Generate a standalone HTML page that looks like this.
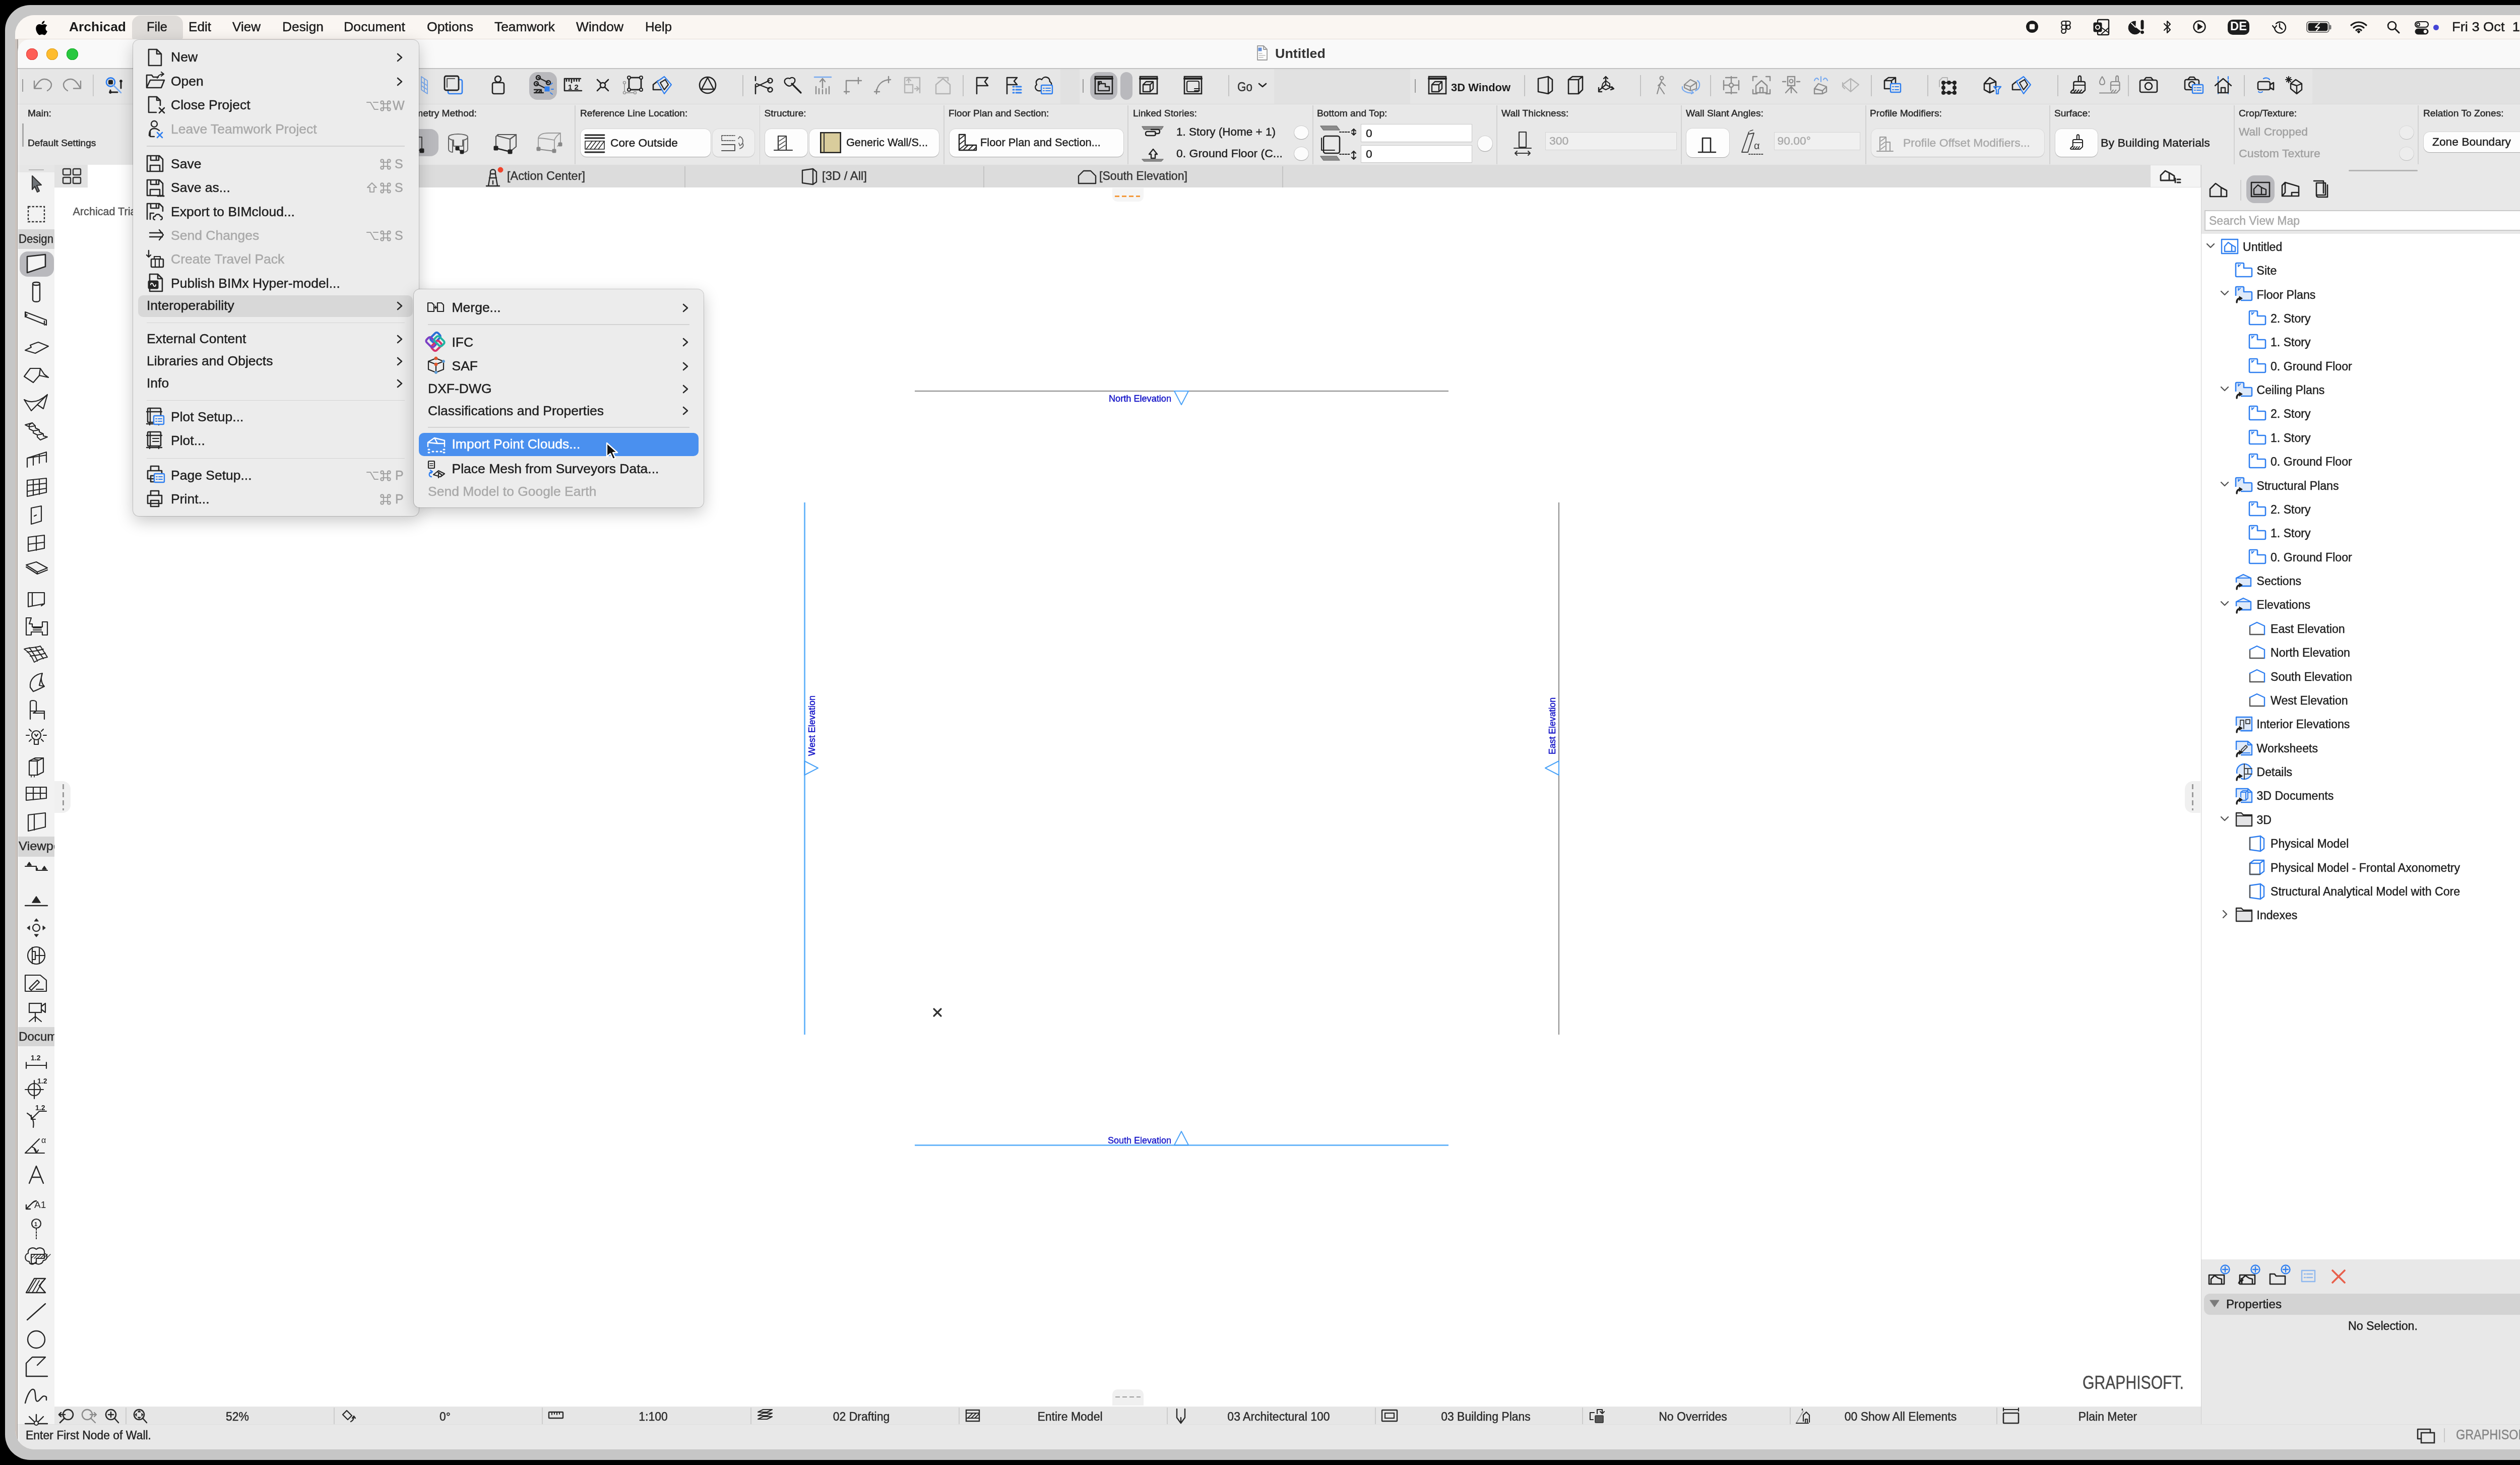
<!DOCTYPE html>
<html><head><meta charset="utf-8">
<style>
html,body{margin:0;padding:0;width:5120px;height:2907px;overflow:hidden;background:#000;}
#root{position:absolute;left:0;top:0;width:2560px;height:1453.5px;zoom:2;will-change:transform;font-family:"Liberation Sans",sans-serif;color:#222;}
.a{position:absolute;}
.t{position:absolute;white-space:nowrap;line-height:1;}
svg{position:absolute;overflow:visible;}
#frame{position:absolute;left:5px;top:5px;width:2550px;height:1443.5px;background:#c6c6c6;border-radius:25px;}
#screen{position:absolute;left:15px;top:15px;width:2530px;height:1423px;background:#f3efeb;border-radius:19px;overflow:hidden;}
#S{position:absolute;left:-15px;top:-15px;width:2560px;height:1453.5px;}
</style></head><body>
<div id="root">
<div id="frame"></div>
<div id="screen"><div id="S">
<div class="a" style="left:15.0px;top:15.0px;width:2530.0px;height:23.75px;background:#faf6f2;"></div>
<div class="a" style="left:15.0px;top:38.5px;width:2530.0px;height:0.5px;background:#e6dcd6;"></div>
<div class="a" style="left:15.0px;top:39.0px;width:2.5px;height:1399.0px;background:#cbc2bd;"></div>
<div class="a" style="left:17.0px;top:39.0px;width:0.75px;height:1399.0px;background:#a39e9a;"></div>
<div class="a" style="left:17.5px;top:39.0px;width:2527.5px;height:28.5px;background:#f9f9f9;border-top-left-radius:12px;border-top-right-radius:12px;"></div>
<div class="a" style="left:17.5px;top:67.5px;width:2527.5px;height:1.0px;background:#c2c2c2;"></div>
<div class="a" style="left:26.0px;top:47.75px;width:11.5px;height:11.5px;background:#fe5f57;border-radius:50%;box-shadow:inset 0 0 0 0.5px #e0443e;"></div>
<div class="a" style="left:46.0px;top:47.75px;width:11.5px;height:11.5px;background:#febc2e;border-radius:50%;box-shadow:inset 0 0 0 0.5px #dea123;"></div>
<div class="a" style="left:66.0px;top:47.75px;width:11.5px;height:11.5px;background:#28c840;border-radius:50%;box-shadow:inset 0 0 0 0.5px #1aab29;"></div>
<div class="a" style="left:17.5px;top:68.5px;width:2527.5px;height:34.5px;background:#e6e6e6;"></div>
<div class="a" style="left:17.5px;top:103.0px;width:2527.5px;height:0.5px;background:#d9d9d9;"></div>
<div class="a" style="left:17.5px;top:103.5px;width:2527.5px;height:60.0px;background:#e8e8e8;"></div>
<div class="a" style="left:17.5px;top:163.5px;width:2527.5px;height:22.5px;background:#dcdcdc;"></div>
<div class="a" style="left:54.0px;top:186.0px;width:2129.5px;height:1209.5px;background:#fff;"></div>
<div class="a" style="left:87.0px;top:163.5px;width:295.5px;height:22.5px;background:#fff;"></div>
<div class="a" style="left:17.5px;top:163.5px;width:36.5px;height:1250.0px;background:#f2f2f2;"></div>
<div class="a" style="left:17.5px;top:163.5px;width:36.5px;height:7.5px;background:#e6e6e6;"></div>
<div class="a" style="left:54.0px;top:163.5px;width:33.0px;height:22.0px;background:#e2e2e2;"></div>
<div class="a" style="left:2183.5px;top:163.5px;width:361.5px;height:1250.0px;background:#e8e8e8;"></div>
<div class="a" style="left:2183.25px;top:163.5px;width:0.75px;height:1250.0px;background:#cfcfcf;"></div>
<div class="a" style="left:2184.0px;top:232.0px;width:361.0px;height:1017.5px;background:#fff;"></div>
<div class="a" style="left:2133.5px;top:164.0px;width:49.5px;height:21.5px;background:#f4f4f4;"></div>
<div class="a" style="left:54.0px;top:1395.5px;width:2129.5px;height:18.0px;background:#e6e6e6;"></div>
<div class="a" style="left:17.5px;top:1413.5px;width:2527.5px;height:24.5px;background:#e8e8e8;"></div>
<div class="a" style="left:17.5px;top:1413.0px;width:2527.5px;height:0.5px;background:#dedede;"></div>
<div class="a" style="left:18.25px;top:68.5px;width:0.75px;height:1361.5px;background:rgba(255,255,255,0.7);"></div>
<div class="t" style="left:68.500px;top:19.992px;font-size:13.3px;color:#1a1a1a;font-weight:bold;transform:scaleX(0.9927);transform-origin:0 0;">Archicad</div>
<div class="a" style="left:131.0px;top:15.5px;width:50.5px;height:23.25px;background:#dfdcd9;border-radius:8px 8px 2px 2px;"></div>
<div class="t" style="left:145.500px;top:19.992px;font-size:13.3px;color:#1a1a1a;font-weight:normal;transform:scaleX(0.9566);transform-origin:0 0;-webkit-text-stroke:0.22px #1a1a1a;">File</div>
<div class="t" style="left:187.000px;top:19.992px;font-size:13.3px;color:#1a1a1a;font-weight:normal;transform:scaleX(0.9818);transform-origin:0 0;-webkit-text-stroke:0.22px #1a1a1a;">Edit</div>
<div class="t" style="left:230.500px;top:19.992px;font-size:13.3px;color:#1a1a1a;font-weight:normal;transform:scaleX(0.9794);transform-origin:0 0;-webkit-text-stroke:0.22px #1a1a1a;">View</div>
<div class="t" style="left:280.000px;top:19.992px;font-size:13.3px;color:#1a1a1a;font-weight:normal;transform:scaleX(0.9903);transform-origin:0 0;-webkit-text-stroke:0.22px #1a1a1a;">Design</div>
<div class="t" style="left:341.000px;top:19.992px;font-size:13.3px;color:#1a1a1a;font-weight:normal;transform:scaleX(1.0063);transform-origin:0 0;-webkit-text-stroke:0.22px #1a1a1a;">Document</div>
<div class="t" style="left:423.500px;top:19.992px;font-size:13.3px;color:#1a1a1a;font-weight:normal;transform:scaleX(1.0036);transform-origin:0 0;-webkit-text-stroke:0.22px #1a1a1a;">Options</div>
<div class="t" style="left:490.500px;top:19.992px;font-size:13.3px;color:#1a1a1a;font-weight:normal;transform:scaleX(0.9900);transform-origin:0 0;-webkit-text-stroke:0.22px #1a1a1a;">Teamwork</div>
<div class="t" style="left:571.500px;top:19.992px;font-size:13.3px;color:#1a1a1a;font-weight:normal;transform:scaleX(0.9936);transform-origin:0 0;-webkit-text-stroke:0.22px #1a1a1a;">Window</div>
<div class="t" style="left:640.000px;top:19.992px;font-size:13.3px;color:#1a1a1a;font-weight:normal;transform:scaleX(0.9688);transform-origin:0 0;-webkit-text-stroke:0.22px #1a1a1a;">Help</div>
<div class="t" style="left:2432.500px;top:19.992px;font-size:13.3px;color:#1a1a1a;font-weight:normal;transform:scaleX(1.0255);transform-origin:0 0;-webkit-text-stroke:0.22px #1a1a1a;">Fri 3 Oct&nbsp;&nbsp;13:50</div>
<div class="t" style="left:1265.000px;top:46.742px;font-size:13.3px;color:#333;font-weight:bold;transform:scaleX(1.0101);transform-origin:0 0;">Untitled</div>
<div class="t" style="left:27.500px;top:107.624px;font-size:9.6px;color:#2a2a2a;font-weight:normal;-webkit-text-stroke:0.25px #2a2a2a;">Main:</div>
<div class="t" style="left:575.500px;top:107.624px;font-size:9.6px;color:#2a2a2a;font-weight:normal;-webkit-text-stroke:0.25px #2a2a2a;">Reference Line Location:</div>
<div class="t" style="left:758.250px;top:107.624px;font-size:9.6px;color:#2a2a2a;font-weight:normal;-webkit-text-stroke:0.25px #2a2a2a;">Structure:</div>
<div class="t" style="left:941.000px;top:107.624px;font-size:9.6px;color:#2a2a2a;font-weight:normal;-webkit-text-stroke:0.25px #2a2a2a;">Floor Plan and Section:</div>
<div class="t" style="left:1124.000px;top:107.624px;font-size:9.6px;color:#2a2a2a;font-weight:normal;-webkit-text-stroke:0.25px #2a2a2a;">Linked Stories:</div>
<div class="t" style="left:1306.500px;top:107.624px;font-size:9.6px;color:#2a2a2a;font-weight:normal;-webkit-text-stroke:0.25px #2a2a2a;">Bottom and Top:</div>
<div class="t" style="left:1489.500px;top:107.624px;font-size:9.6px;color:#2a2a2a;font-weight:normal;-webkit-text-stroke:0.25px #2a2a2a;">Wall Thickness:</div>
<div class="t" style="left:1672.500px;top:107.624px;font-size:9.6px;color:#2a2a2a;font-weight:normal;-webkit-text-stroke:0.25px #2a2a2a;">Wall Slant Angles:</div>
<div class="t" style="left:1855.000px;top:107.624px;font-size:9.6px;color:#2a2a2a;font-weight:normal;-webkit-text-stroke:0.25px #2a2a2a;">Profile Modifiers:</div>
<div class="t" style="left:2038.000px;top:107.624px;font-size:9.6px;color:#2a2a2a;font-weight:normal;-webkit-text-stroke:0.25px #2a2a2a;">Surface:</div>
<div class="t" style="left:2221.000px;top:107.624px;font-size:9.6px;color:#2a2a2a;font-weight:normal;-webkit-text-stroke:0.25px #2a2a2a;">Crop/Texture:</div>
<div class="t" style="left:2404.000px;top:107.624px;font-size:9.6px;color:#2a2a2a;font-weight:normal;-webkit-text-stroke:0.25px #2a2a2a;">Relation To Zones:</div>
<div class="t" style="left:393.500px;top:107.624px;font-size:9.6px;color:#2a2a2a;font-weight:normal;-webkit-text-stroke:0.25px #2a2a2a;">Geometry Method:</div>
<div class="t" style="left:27.500px;top:137.124px;font-size:9.6px;color:#2a2a2a;font-weight:normal;-webkit-text-stroke:0.25px #2a2a2a;">Default Settings</div>
<div class="t" style="left:503.000px;top:169.096px;font-size:11.7px;color:#333;font-weight:normal;transform:scaleX(1.0015);transform-origin:0 0;-webkit-text-stroke:0.22px #333;">[Action Center]</div>
<div class="t" style="left:815.500px;top:169.096px;font-size:11.7px;color:#333;font-weight:normal;transform:scaleX(1.0214);transform-origin:0 0;-webkit-text-stroke:0.22px #333;">[3D / All]</div>
<div class="t" style="left:1090.500px;top:169.096px;font-size:11.7px;color:#333;font-weight:normal;transform:scaleX(0.9892);transform-origin:0 0;-webkit-text-stroke:0.22px #333;">[South Elevation]</div>
<div class="a" style="left:679.0px;top:165.0px;width:1.0px;height:21.0px;background:#c4c4c4;"></div>
<div class="a" style="left:975.5px;top:165.0px;width:1.0px;height:21.0px;background:#c4c4c4;"></div>
<div class="a" style="left:1272.0px;top:165.0px;width:1.0px;height:21.0px;background:#c4c4c4;"></div>
<div class="t" style="left:223.992px;top:1399.765px;font-size:11.5px;color:#2a2a2a;font-weight:normal;-webkit-text-stroke:0.22px #2a2a2a;">52%</div>
<div class="t" style="left:436.003px;top:1399.765px;font-size:11.5px;color:#2a2a2a;font-weight:normal;-webkit-text-stroke:0.22px #2a2a2a;">0°</div>
<div class="t" style="left:633.611px;top:1399.765px;font-size:11.5px;color:#2a2a2a;font-weight:normal;-webkit-text-stroke:0.22px #2a2a2a;">1:100</div>
<div class="t" style="left:826.373px;top:1399.765px;font-size:11.5px;color:#2a2a2a;font-weight:normal;-webkit-text-stroke:0.22px #2a2a2a;">02 Drafting</div>
<div class="t" style="left:1029.221px;top:1399.765px;font-size:11.5px;color:#2a2a2a;font-weight:normal;-webkit-text-stroke:0.22px #2a2a2a;">Entire Model</div>
<div class="t" style="left:1217.676px;top:1399.765px;font-size:11.5px;color:#2a2a2a;font-weight:normal;-webkit-text-stroke:0.22px #2a2a2a;">03 Architectural 100</div>
<div class="t" style="left:1429.566px;top:1399.765px;font-size:11.5px;color:#2a2a2a;font-weight:normal;-webkit-text-stroke:0.22px #2a2a2a;">03 Building Plans</div>
<div class="t" style="left:1645.629px;top:1399.765px;font-size:11.5px;color:#2a2a2a;font-weight:normal;-webkit-text-stroke:0.22px #2a2a2a;">No Overrides</div>
<div class="t" style="left:1829.886px;top:1399.765px;font-size:11.5px;color:#2a2a2a;font-weight:normal;-webkit-text-stroke:0.22px #2a2a2a;">00 Show All Elements</div>
<div class="t" style="left:2061.918px;top:1399.765px;font-size:11.5px;color:#2a2a2a;font-weight:normal;-webkit-text-stroke:0.22px #2a2a2a;">Plain Meter</div>
<div class="a" style="left:124.5px;top:1396.5px;width:1.0px;height:16.5px;background:#cdcdcd;"></div>
<div class="a" style="left:331.0px;top:1396.5px;width:1.0px;height:16.5px;background:#cdcdcd;"></div>
<div class="a" style="left:537.5px;top:1396.5px;width:1.0px;height:16.5px;background:#cdcdcd;"></div>
<div class="a" style="left:744.5px;top:1396.5px;width:1.0px;height:16.5px;background:#cdcdcd;"></div>
<div class="a" style="left:951.0px;top:1396.5px;width:1.0px;height:16.5px;background:#cdcdcd;"></div>
<div class="a" style="left:1157.5px;top:1396.5px;width:1.0px;height:16.5px;background:#cdcdcd;"></div>
<div class="a" style="left:1364.0px;top:1396.5px;width:1.0px;height:16.5px;background:#cdcdcd;"></div>
<div class="a" style="left:1569.5px;top:1396.5px;width:1.0px;height:16.5px;background:#cdcdcd;"></div>
<div class="a" style="left:1775.5px;top:1396.5px;width:1.0px;height:16.5px;background:#cdcdcd;"></div>
<div class="a" style="left:1980.5px;top:1396.5px;width:1.0px;height:16.5px;background:#cdcdcd;"></div>
<div class="t" style="left:25.250px;top:1418.265px;font-size:11.5px;color:#222;font-weight:normal;transform:scaleX(0.9973);transform-origin:0 0;-webkit-text-stroke:0.22px #222;">Enter First Node of Wall.</div>
<div class="t" style="left:2436.500px;top:1417.072px;font-size:13.5px;color:#858585;font-weight:normal;transform:scaleX(0.8660);transform-origin:0 0;-webkit-text-stroke:0.22px #858585;">GRAPHISOFT</div>
<div class="t" style="left:2517.500px;top:1417.072px;font-size:13.5px;color:#a5a5a5;font-weight:normal;transform:scaleX(1.1481);transform-origin:0 0;-webkit-text-stroke:0.22px #a5a5a5;">ID</div>
<div class="t" style="left:2066.000px;top:1362.501px;font-size:18.9px;color:#4a4a4a;font-weight:normal;transform:scaleX(0.7975);transform-origin:0 0;-webkit-text-stroke:0.22px #4a4a4a;">GRAPHISOFT.</div>
<div class="t" style="left:72.250px;top:204.608px;font-size:10.8px;color:#555;font-weight:normal;-webkit-text-stroke:0.22px #555;">Archicad Tria</div>
<svg style="left:34.0px;top:18.0px;" width="16.0" height="18.0" viewBox="0 0 32 36"><path d="M22.5 19.2c0-3.6 2.9-5.3 3.1-5.4-1.700-2.500-4.300-2.800-5.200-2.900-2.200-.2-4.300 1.300-5.400 1.300-1.100 0-2.800-1.300-4.700-1.200-2.400 0-4.600 1.400-5.900 3.600-2.500 4.300-.6 10.700 1.800 14.200 1.200 1.700 2.600 3.600 4.400 3.600 1.800-.1 2.400-1.100 4.600-1.100 2.100 0 2.700 1.100 4.600 1.100 1.900 0 3.100-1.700 4.200-3.500 1.300-2 1.900-3.900 1.900-4-.1 0-3.600-1.400-3.400-5.700zM19 8.700c1-1.200 1.600-2.800 1.400-4.400-1.400.1-3.100.9-4.100 2.100-.9 1-1.700 2.700-1.500 4.300 1.600.1 3.200-.8 4.200-2z" fill="#000" transform="translate(0,1) scale(1.0)"/></svg>
<svg style="left:2009.0px;top:19.5px;" width="14.0" height="14.0" viewBox="0 0 28 28"><circle cx="14" cy="14" r="11" stroke="#1a1a1a" stroke-width="2" fill="#1a1a1a"/><rect x="9" y="9" width="10" height="10" rx="2" stroke="#faf6f2" stroke-width="0.5" fill="#faf6f2"/></svg>
<svg style="left:2043.5px;top:20.0px;" width="12.0" height="14.0" viewBox="0 0 24 28"><path d="M12 2 H7 C2 2 2 10 7 10 H12 Z M12 2 H17 C22 2 22 10 17 10 H12 M12 10 H7 C2 10 2 18 7 18 H12 Z M12 18 H7 C2 18 2 26 7 26 C10 26 12 24 12 21 Z M17 10 C22 10 22 18 17 18 C12 18 12 10 17 10 Z" stroke="#1a1a1a" stroke-width="2.2" fill="none" stroke-linejoin="round" stroke-linecap="round" /></svg>
<svg style="left:2076.0px;top:18.5px;" width="17.0" height="17.0" viewBox="0 0 34 34"><rect x="10" y="2" width="22" height="30" rx="2" stroke="#1a1a1a" stroke-width="2.4" fill="none"/><rect x="2" y="8" width="16" height="18" rx="2" stroke="#1a1a1a" stroke-width="1" fill="#1a1a1a"/><circle cx="10" cy="17" r="4" stroke="#faf6f2" stroke-width="2.2" fill="none"/><path d="M18 18 L32 28 M18 30 L32 18" stroke="#1a1a1a" stroke-width="2" fill="none" stroke-linejoin="round" stroke-linecap="round" /></svg>
<svg style="left:2110.5px;top:19.0px;" width="18.0" height="16.0" viewBox="0 0 36 32"><path d="M16 4 A13 13 0 1 0 26 24 L16 16 Z" stroke="#1a1a1a" stroke-width="1" fill="#1a1a1a" stroke-linejoin="round" stroke-linecap="round" /><path d="M16 16 L8 8" stroke="#faf6f2" stroke-width="2" fill="none" stroke-linejoin="round" stroke-linecap="round" /><rect x="27" y="2" width="5" height="18" rx="2" stroke="#1a1a1a" stroke-width="1" fill="#1a1a1a"/><circle cx="29.5" cy="26" r="3" stroke="#1a1a1a" stroke-width="1" fill="#1a1a1a"/></svg>
<svg style="left:2145.0px;top:19.5px;" width="11.0" height="15.0" viewBox="0 0 22 30"><path d="M4 8 L16 20 L10 26 V3 L16 9 L4 21" stroke="#1a1a1a" stroke-width="2.2" fill="none" stroke-linejoin="round" stroke-linecap="round" /></svg>
<svg style="left:2174.5px;top:19.5px;" width="16.0" height="14.0" viewBox="0 0 32 28"><circle cx="15" cy="14" r="11.5" stroke="#1a1a1a" stroke-width="2.4" fill="none"/><path d="M12 8 L21 14 L12 20 Z" stroke="#1a1a1a" stroke-width="1" fill="#1a1a1a" stroke-linejoin="round" stroke-linecap="round" /></svg>
<div class="a" style="left:2210.0px;top:19.25px;width:21.5px;height:15.25px;background:#1e1e1e;border-radius:5px;"></div>
<div class="t" style="left:2212.500px;top:20.681px;font-size:11.6px;color:#fff;font-weight:bold;transform:scaleX(1.0239);transform-origin:0 0;">DE</div>
<svg style="left:2252.5px;top:19.5px;" width="17.0" height="15.0" viewBox="0 0 34 30"><path d="M8 16 A11 11 0 1 0 11 8" stroke="#1a1a1a" stroke-width="2.4" fill="none" stroke-linejoin="round" stroke-linecap="round" /><path d="M4 12 L8 17 L12 12" stroke="#1a1a1a" stroke-width="2.2" fill="none" stroke-linejoin="round" stroke-linecap="round" /><path d="M18 8 V15 L23 19" stroke="#1a1a1a" stroke-width="2.4" fill="none" stroke-linejoin="round" stroke-linecap="round" /></svg>
<svg style="left:2287.5px;top:20.5px;" width="27.0" height="13.0" viewBox="0 0 54 26"><rect x="2" y="2" width="44" height="21" rx="5" stroke="#555" stroke-width="1.6" fill="none"/><rect x="5" y="5" width="38" height="15" rx="3" stroke="#1a1a1a" stroke-width="1" fill="#1a1a1a"/><rect x="47" y="9" width="3" height="8" rx="1" stroke="#777" stroke-width="1" fill="#777"/><path d="M27 5 L19 13 H27 L21 20" stroke="#faf6f2" stroke-width="2.2" fill="none" stroke-linejoin="round" stroke-linecap="round" /></svg>
<svg style="left:2331.0px;top:20.0px;" width="18.0" height="14.0" viewBox="0 0 36 28"><path d="M3 10 C12 2 24 2 33 10 M8 15 C14 10 22 10 28 15 M13 20 C16 17 20 17 23 20" stroke="#1a1a1a" stroke-width="3.2" fill="none" stroke-linejoin="round" stroke-linecap="round" /><path d="M15 23 L18 26 L21 23 L18 20 Z" stroke="#1a1a1a" stroke-width="1" fill="#1a1a1a" stroke-linejoin="round" stroke-linecap="round" /></svg>
<svg style="left:2367.0px;top:20.0px;" width="15.0" height="14.0" viewBox="0 0 30 28"><circle cx="12" cy="11" r="8" stroke="#1a1a1a" stroke-width="2.6" fill="none"/><path d="M18 17 L26 25" stroke="#1a1a1a" stroke-width="3" fill="none" stroke-linejoin="round" stroke-linecap="round" /></svg>
<svg style="left:2395.0px;top:20.5px;" width="15.0" height="14.0" viewBox="0 0 30 28"><rect x="2" y="2" width="26" height="11" rx="5.5" stroke="#1a1a1a" stroke-width="2.2" fill="none"/><circle cx="8" cy="7.5" r="3" stroke="#1a1a1a" stroke-width="1.8" fill="none"/><rect x="2" y="16" width="26" height="11" rx="5.5" stroke="#1a1a1a" stroke-width="1" fill="#1a1a1a"/><circle cx="22" cy="21.5" r="3" stroke="#faf6f2" stroke-width="1" fill="#faf6f2"/></svg>
<div class="a" style="left:2414.0px;top:24.25px;width:5.5px;height:5.5px;background:#4545d6;border-radius:50%;"></div>
<svg style="left:1246.0px;top:43.75px;" width="13.0" height="17.0" viewBox="0 0 26 34"><path d="M3 3 H15 L22 10 V31 H3 Z M15 3 V10 H22" stroke="#999" stroke-width="1.8" fill="#fdfdfd" stroke-linejoin="round" stroke-linecap="round" /><rect x="5" y="7" width="6" height="6" rx="0" stroke="#6a93d8" stroke-width="1" fill="#6a93d8"/><path d="M6 18 H12 M6 22 H18 M6 26 H14" stroke="#bbb" stroke-width="1.6" fill="none" stroke-linejoin="round" stroke-linecap="round" /></svg>
<div class="a" style="left:1052.0px;top:68.5px;width:19.0px;height:34.5px;background:#e1e1e1;"></div>
<div class="a" style="left:1264.0px;top:68.5px;width:135.0px;height:34.5px;background:#e1e1e1;"></div>
<div class="a" style="left:2294.0px;top:68.5px;width:251.0px;height:34.5px;background:#e1e1e1;"></div>
<div class="a" style="left:22.0px;top:78.5px;width:1.0px;height:12.5px;background:#9a9a9a;"></div>
<svg style="left:32.0px;top:75.0px;" width="20.0" height="18.0" viewBox="0 0 40 36"><path d="M4 11 V25.5 H18" stroke="#8c8c8c" stroke-width="2.4" fill="none" stroke-linejoin="round" stroke-linecap="round" /><path d="M5 24 C12 12 17 7 24 7 C31 7 38 12 38 18 C38 24 35 27 30 30" stroke="#8c8c8c" stroke-width="2.4" fill="none" stroke-linejoin="round" stroke-linecap="round" /></svg>
<svg style="left:62.0px;top:75.0px;" width="20.0" height="18.0" viewBox="0 0 40 36"><path d="M36 11 V25.5 H22" stroke="#8c8c8c" stroke-width="2.4" fill="none" stroke-linejoin="round" stroke-linecap="round" /><path d="M35 24 C28 12 23 7 16 7 C9 7 2 12 2 18 C2 24 5 27 10 30" stroke="#8c8c8c" stroke-width="2.4" fill="none" stroke-linejoin="round" stroke-linecap="round" /></svg>
<div class="a" style="left:92.0px;top:74.0px;width:1.0px;height:21.5px;background:#c8c8c8;"></div>
<svg style="left:103.0px;top:75.0px;" width="21.0" height="20.0" viewBox="0 0 42 40"><circle cx="13.5" cy="13" r="8.5" stroke="#2f7ff0" stroke-width="2.8" fill="none"/><rect x="9.5" y="9" width="8" height="8" rx="2" stroke="#222" stroke-width="1.2" fill="#222"/><path d="M19 19 L34 34" stroke="#78aaf0" stroke-width="2.6" fill="none" stroke-linejoin="round" stroke-linecap="round" /><path d="M34 12 V25" stroke="#222" stroke-width="3" fill="none" stroke-linejoin="round" stroke-linecap="round" /><circle cx="34" cy="11" r="2.4" stroke="#222" stroke-width="1" fill="#222"/><path d="M13 29 V33 H27" stroke="#222" stroke-width="3" fill="none" stroke-linejoin="round" stroke-linecap="round" /><circle cx="13" cy="33" r="2.4" stroke="#222" stroke-width="1" fill="#222"/></svg>
<svg style="left:415.0px;top:75.0px;" width="12.0" height="20.0" viewBox="0 0 24 40"><path d="M6 2 L18 10 V36 L6 28 Z M6 12 L18 20 M6 20 L18 28 M12 6 V32" stroke="#78aaf0" stroke-width="1.8" fill="none" stroke-linejoin="round" stroke-linecap="round" /></svg>
<svg style="left:440.0px;top:74.5px;" width="20.0" height="20.0" viewBox="0 0 40 40"><rect x="9" y="9" width="28" height="28" rx="3" stroke="#2f7ff0" stroke-width="2.6" fill="none"/><rect x="2" y="2" width="28" height="28" rx="3" stroke="#222" stroke-width="2.8" fill="#e6e6e6"/><path d="M7 24 V7 H22" stroke="#555" stroke-width="2.2" fill="none" stroke-linejoin="round" stroke-linecap="round" /></svg>
<svg style="left:487.0px;top:74.5px;" width="15.0" height="20.0" viewBox="0 0 30 40"><circle cx="14" cy="8" r="6" stroke="#222" stroke-width="2.6" fill="none"/><rect x="3" y="15" width="23" height="22" rx="3" stroke="#222" stroke-width="2.6" fill="none"/></svg>
<div class="a" style="left:525.0px;top:71.25px;width:27.5px;height:27.625px;background:#b9b9bd;border-radius:8px;"></div>
<svg style="left:528.0px;top:75.0px;" width="21.0" height="20.0" viewBox="0 0 42 40"><circle cx="8" cy="16" r="4" stroke="#222" stroke-width="2.6" fill="none"/><circle cx="12" cy="4" r="4" stroke="#222" stroke-width="2.6" fill="none"/><circle cx="32" cy="14" r="4" stroke="#222" stroke-width="2.6" fill="none"/><path d="M12 4 L32 14 M8 16 L28 26" stroke="#222" stroke-width="2.4" fill="none" stroke-linejoin="round" stroke-linecap="round" /><path d="M4 34 H22 M4 28 H18 V34 M6 34 L12 28 M12 34 L18 28" stroke="#222" stroke-width="2.4" fill="none" stroke-linejoin="round" stroke-linecap="round" /><rect x="25" y="22" width="9" height="9" rx="0" stroke="#2f7ff0" stroke-width="1" fill="#2f7ff0"/><path d="M36 18 L40 15 M38 27 H42 M36 34 L40 37" stroke="#2f7ff0" stroke-width="1.8" fill="none" stroke-linejoin="round" stroke-linecap="round" /></svg>
<svg style="left:559.0px;top:76.0px;" width="19.0" height="16.0" viewBox="0 0 38 32"><path d="M2 28 V4 H34 M6 4 V9 M11 4 V9 M16 4 V12 M21 4 V9 M26 4 V9 M31 4 V9 M2 28 H36" stroke="#222" stroke-width="2.6" fill="none" stroke-linejoin="round" stroke-linecap="round" /><text x="9" y="26" font-size="15" font-family="Liberation Sans" font-weight="bold" fill="#222">1 2</text></svg>
<svg style="left:591.0px;top:77.5px;" width="14.0" height="14.0" viewBox="0 0 28 28"><path d="M3 3 L10 10 M25 3 L18 10 M3 25 L10 18 M25 25 L18 18" stroke="#222" stroke-width="2.6" fill="none" stroke-linejoin="round" stroke-linecap="round" /><circle cx="14" cy="14" r="5" stroke="#222" stroke-width="2.6" fill="none"/></svg>
<svg style="left:618.0px;top:75.0px;" width="20.0" height="19.0" viewBox="0 0 40 38"><rect x="12" y="4" width="24" height="24" rx="0" stroke="#222" stroke-width="2.8" fill="none"/><circle cx="12" cy="4" r="3" stroke="#222" stroke-width="2" fill="#e6e6e6"/><circle cx="36" cy="4" r="3" stroke="#222" stroke-width="2" fill="#e6e6e6"/><circle cx="12" cy="28" r="3" stroke="#222" stroke-width="2" fill="#e6e6e6"/><circle cx="36" cy="28" r="3" stroke="#222" stroke-width="2" fill="#e6e6e6"/><path d="M3 14 V34 H24" stroke="#999" stroke-width="1.8" fill="none" stroke-linejoin="round" stroke-linecap="round" /><circle cx="3" cy="14" r="2.5" stroke="#999" stroke-width="1.6" fill="#e6e6e6"/><circle cx="3" cy="34" r="2.5" stroke="#999" stroke-width="1.6" fill="#e6e6e6"/><circle cx="24" cy="34" r="2.5" stroke="#999" stroke-width="1.6" fill="#e6e6e6"/></svg>
<svg style="left:647.0px;top:75.0px;" width="20.0" height="19.0" viewBox="0 0 40 38"><path d="M2 28 V18 L12 10 L22 10 V28 Z" stroke="#222" stroke-width="2.6" fill="none" stroke-linejoin="round" stroke-linecap="round" /><path d="M10 12 L24 2 L38 18 L24 36 Z" stroke="#2f7ff0" stroke-width="2.2" fill="#e6e6e6" stroke-linejoin="round" stroke-linecap="round" /><path d="M16 14 L26 8 L32 18 L24 28 Z" stroke="#222" stroke-width="2.2" fill="none" stroke-linejoin="round" stroke-linecap="round" /></svg>
<svg style="left:693.0px;top:75.5px;" width="19.0" height="19.0" viewBox="0 0 38 38"><circle cx="18" cy="18" r="16" stroke="#222" stroke-width="2.6" fill="none"/><path d="M18 3 L6 26 H30 Z" stroke="#222" stroke-width="2.4" fill="none" stroke-linejoin="round" stroke-linecap="round" /></svg>
<div class="a" style="left:736.5px;top:74.5px;width:1.0px;height:21.0px;background:#c2c2c2;"></div>
<svg style="left:748.0px;top:75.0px;" width="20.0" height="19.0" viewBox="0 0 40 38"><path d="M3 2 V10 M3 18 V36" stroke="#222" stroke-width="2.6" fill="none" stroke-linejoin="round" stroke-linecap="round" /><path d="M5 16 L30 26 M5 22 L30 10" stroke="#222" stroke-width="2.4" fill="none" stroke-linejoin="round" stroke-linecap="round" /><circle cx="32" cy="10" r="4.5" stroke="#222" stroke-width="2.6" fill="none"/><circle cx="32" cy="28" r="4.5" stroke="#222" stroke-width="2.6" fill="none"/></svg>
<svg style="left:776.5px;top:75.0px;" width="20.0" height="19.0" viewBox="0 0 40 38"><path d="M4 14 C2 6 10 4 14 6 C18 2 26 4 24 12 C22 16 18 18 16 20 C12 22 8 20 4 14 Z" stroke="#222" stroke-width="2.4" fill="none" stroke-linejoin="round" stroke-linecap="round" /><path d="M18 16 L36 34" stroke="#222" stroke-width="3.2" fill="none" stroke-linejoin="round" stroke-linecap="round" /></svg>
<svg style="left:806.5px;top:75.0px;" width="19.0" height="19.0" viewBox="0 0 38 38"><path d="M3 3 H36" stroke="#78aaf0" stroke-width="2.6" fill="none" stroke-linejoin="round" stroke-linecap="round" /><path d="M19 6 V24 M14 12 L19 6 L24 12 M6 22 V36 M12 26 V36 M19 28 V36 M26 26 V36 M32 22 V36" stroke="#8c8c8c" stroke-width="2.4" fill="none" stroke-linejoin="round" stroke-linecap="round" /></svg>
<svg style="left:836.5px;top:75.0px;" width="19.0" height="19.0" viewBox="0 0 38 38"><path d="M6 36 V10 H30 M30 4 V16 M36 10 H30 M2 32 H12" stroke="#8c8c8c" stroke-width="2.4" fill="none" stroke-linejoin="round" stroke-linecap="round" /></svg>
<svg style="left:866.5px;top:75.0px;" width="19.0" height="19.0" viewBox="0 0 38 38"><path d="M6 36 C6 18 18 8 34 8 M30 2 V14 M2 32 H12 M6 28 V36" stroke="#8c8c8c" stroke-width="2.4" fill="none" stroke-linejoin="round" stroke-linecap="round" /></svg>
<svg style="left:896.5px;top:75.0px;" width="18.0" height="19.0" viewBox="0 0 36 38"><path d="M2 4 H32 V34 M2 4 V34 M2 18 H18 V34 H2 M10 14 V6 M6 10 L10 6 L14 10 M22 26 H30 M26 22 L30 26 L26 30" stroke="#b4b4b4" stroke-width="2.4" fill="none" stroke-linejoin="round" stroke-linecap="round" /></svg>
<svg style="left:926.5px;top:75.0px;" width="18.0" height="19.0" viewBox="0 0 36 38"><path d="M4 36 V18 L18 6 L32 18 V36 Z M8 4 H28 V10" stroke="#b4b4b4" stroke-width="2.4" fill="none" stroke-linejoin="round" stroke-linecap="round" /></svg>
<div class="a" style="left:955.0px;top:74.5px;width:1.0px;height:21.0px;background:#c2c2c2;"></div>
<svg style="left:967.0px;top:75.0px;" width="15.0" height="19.0" viewBox="0 0 30 38"><path d="M4 36 V4 H26 L20 12 L26 20 H4" stroke="#222" stroke-width="2.6" fill="none" stroke-linejoin="round" stroke-linecap="round" /></svg>
<svg style="left:997.0px;top:75.0px;" width="18.0" height="19.0" viewBox="0 0 36 38"><path d="M4 36 V4 H24 L18 11 L24 18 H4" stroke="#222" stroke-width="2.6" fill="none" stroke-linejoin="round" stroke-linecap="round" /><path d="M16 22 H18 M22 22 H32 M16 28 H18 M22 28 H32 M16 34 H18 M22 34 H32" stroke="#2f7ff0" stroke-width="3" fill="none" stroke-linejoin="round" stroke-linecap="round" /></svg>
<svg style="left:1024.5px;top:75.0px;" width="21.0" height="19.0" viewBox="0 0 42 38"><path d="M16 30 C6 32 2 22 8 18 C4 10 12 4 18 8 C22 0 34 2 34 12 C38 14 38 18 36 20" stroke="#222" stroke-width="2.4" fill="none" stroke-linejoin="round" stroke-linecap="round" /><rect x="17" y="19" width="22" height="17" rx="2" stroke="#2f7ff0" stroke-width="2.4" fill="#e6e6e6"/><path d="M21 25 H23 M26 25 H35 M21 30 H23 M26 30 H35" stroke="#2f7ff0" stroke-width="2" fill="none" stroke-linejoin="round" stroke-linecap="round" /></svg>
<div class="a" style="left:1074.0px;top:78.5px;width:1.0px;height:13.5px;background:#9a9a9a;"></div>
<div class="a" style="left:1081.5px;top:71.5px;width:27.0px;height:27.5px;background:#b9b9bd;border-radius:8px;"></div>
<div class="a" style="left:1111.5px;top:71.5px;width:12.0px;height:27.5px;background:#b9b9bd;border-radius:8px;"></div>
<svg style="left:1085.5px;top:75.0px;" width="19.0" height="19.0" viewBox="0 0 38 38"><rect x="2" y="2" width="34" height="34" rx="0" stroke="#222" stroke-width="2.6" fill="#c8c8cc"/><path d="M2 6 H36" stroke="#222" stroke-width="4" fill="none" stroke-linejoin="round" stroke-linecap="round" /><path d="M8 30 V12 L14 12 V16 H22 V22 H30 V30 Z M10 14 V18 L12 16" stroke="#222" stroke-width="2.4" fill="none" stroke-linejoin="round" stroke-linecap="round" /></svg>
<svg style="left:1130.0px;top:75.0px;" width="20.0" height="19.0" viewBox="0 0 40 38"><rect x="2" y="2" width="34" height="34" rx="0" stroke="#222" stroke-width="2.6" fill="none"/><path d="M2 6 H36" stroke="#222" stroke-width="4" fill="none" stroke-linejoin="round" stroke-linecap="round" /><path d="M8 32 V18 L14 12 H28 V26 L22 32 Z M8 18 H22 V32 M22 18 L28 12" stroke="#222" stroke-width="2.4" fill="none" stroke-linejoin="round" stroke-linecap="round" /></svg>
<svg style="left:1174.0px;top:75.0px;" width="20.0" height="19.0" viewBox="0 0 40 38"><rect x="2" y="2" width="34" height="34" rx="0" stroke="#222" stroke-width="2.6" fill="none"/><path d="M2 6 H36" stroke="#222" stroke-width="4" fill="none" stroke-linejoin="round" stroke-linecap="round" /><rect x="7" y="11" width="24" height="21" rx="3" stroke="#222" stroke-width="2.2" fill="none"/><path d="M22 26 H32 M22 30 H32" stroke="#222" stroke-width="2" fill="none" stroke-linejoin="round" stroke-linecap="round" /></svg>
<div class="a" style="left:1218.5px;top:74.5px;width:1.0px;height:21.0px;background:#c2c2c2;"></div>
<div class="t" style="left:1227.500px;top:79.919px;font-size:12.5px;color:#333;font-weight:normal;transform:scaleX(0.8996);transform-origin:0 0;-webkit-text-stroke:0.22px #333;">Go</div>
<svg style="left:1248.0px;top:82.0px;" width="9.0" height="6.0" viewBox="0 0 18 12"><path d="M2 2 L9 8 L16 2" stroke="#222" stroke-width="2.6" fill="none" stroke-linejoin="round" stroke-linecap="round" /></svg>
<div class="a" style="left:1403.5px;top:78.5px;width:1.0px;height:13.5px;background:#9a9a9a;"></div>
<svg style="left:1416.5px;top:75.0px;" width="19.0" height="19.0" viewBox="0 0 38 38"><rect x="2" y="2" width="34" height="34" rx="0" stroke="#222" stroke-width="2.6" fill="none"/><path d="M2 6 H36" stroke="#222" stroke-width="4" fill="none" stroke-linejoin="round" stroke-linecap="round" /><path d="M8 32 V18 L14 12 H28 V26 L22 32 Z M8 18 H22 V32 M22 18 L28 12" stroke="#222" stroke-width="2.4" fill="none" stroke-linejoin="round" stroke-linecap="round" /></svg>
<div class="t" style="left:1439.500px;top:80.850px;font-size:11.4px;color:#1a1a1a;font-weight:bold;transform:scaleX(0.9621);transform-origin:0 0;">3D Window</div>
<div class="a" style="left:1512.0px;top:74.5px;width:1.0px;height:21.0px;background:#c2c2c2;"></div>
<svg style="left:1524.0px;top:75.0px;" width="18.0" height="19.0" viewBox="0 0 36 38"><path d="M4 6 L24 2 L32 8 V30 L24 36 L4 32 Z M24 2 V36" stroke="#222" stroke-width="2.6" fill="none" stroke-linejoin="round" stroke-linecap="round" /></svg>
<svg style="left:1554.0px;top:75.0px;" width="18.0" height="19.0" viewBox="0 0 36 38"><path d="M4 8 L12 2 H32 V28 L24 36 H4 Z M4 8 H24 V36 M24 8 L32 2" stroke="#222" stroke-width="2.6" fill="none" stroke-linejoin="round" stroke-linecap="round" /></svg>
<svg style="left:1583.0px;top:75.0px;" width="20.0" height="19.0" viewBox="0 0 40 38"><path d="M20 2 V18 M16 6 L20 2 L24 6 M20 18 L6 30 M6 24 V32 H12 M20 18 L36 26 M32 22 L36 26 L30 28" stroke="#222" stroke-width="2.4" fill="none" stroke-linejoin="round" stroke-linecap="round" /><path d="M14 16 L20 10 L28 16 V24 L20 28 L12 24 Z" stroke="#222" stroke-width="2" fill="none" stroke-linejoin="round" stroke-linecap="round" /></svg>
<div class="a" style="left:1627.0px;top:74.5px;width:1.0px;height:21.0px;background:#c2c2c2;"></div>
<svg style="left:1642.0px;top:75.0px;" width="13.0" height="19.0" viewBox="0 0 26 38"><circle cx="13" cy="5" r="3.5" stroke="#8c8c8c" stroke-width="2.2" fill="none"/><path d="M13 10 L8 22 L4 36 M12 14 L6 20 M14 14 L20 20 M10 24 L18 36" stroke="#8c8c8c" stroke-width="2.2" fill="none" stroke-linejoin="round" stroke-linecap="round" /></svg>
<svg style="left:1667.0px;top:75.0px;" width="21.0" height="19.0" viewBox="0 0 42 38"><path d="M8 18 L20 8 L32 14 V26 L20 30 L8 24 Z M8 18 L20 22 L32 14 M20 22 V30" stroke="#8c8c8c" stroke-width="2.2" fill="none" stroke-linejoin="round" stroke-linecap="round" /><path d="M4 22 C2 30 14 36 26 34 M34 10 C40 14 40 26 30 30 M26 34 L22 30 M26 34 L22 36" stroke="#78aaf0" stroke-width="2.2" fill="none" stroke-linejoin="round" stroke-linecap="round" /></svg>
<div class="a" style="left:1696.5px;top:74.5px;width:1.0px;height:21.0px;background:#c2c2c2;"></div>
<svg style="left:1708.0px;top:75.0px;" width="19.0" height="19.0" viewBox="0 0 38 38"><path d="M4 10 V28 M34 10 V28 M8 4 H30 M8 34 H30 M4 19 H34 M19 2 V36" stroke="#8c8c8c" stroke-width="2.4" fill="none" stroke-linejoin="round" stroke-linecap="round" /><circle cx="19" cy="19" r="4" stroke="#8c8c8c" stroke-width="2.4" fill="#e6e6e6"/></svg>
<svg style="left:1738.0px;top:75.0px;" width="19.0" height="19.0" viewBox="0 0 38 38"><path d="M2 10 V2 H10 M28 2 H36 V10 M2 28 V36 H10 M28 36 H36 V28 M8 20 L19 10 L30 20 V34 H8 Z M16 34 V24 H22 V34" stroke="#8c8c8c" stroke-width="2.4" fill="none" stroke-linejoin="round" stroke-linecap="round" /></svg>
<svg style="left:1767.5px;top:75.0px;" width="19.0" height="19.0" viewBox="0 0 38 38"><rect x="12" y="2" width="14" height="18" rx="0" stroke="#8c8c8c" stroke-width="2.4" fill="none"/><circle cx="19" cy="11" r="3.5" stroke="#8c8c8c" stroke-width="2.2" fill="none"/><path d="M2 12 H8 M30 12 H36 M19 20 V34 M19 22 L8 34 M19 22 L30 34" stroke="#8c8c8c" stroke-width="2.4" fill="none" stroke-linejoin="round" stroke-linecap="round" /></svg>
<svg style="left:1798.0px;top:75.0px;" width="17.0" height="19.0" viewBox="0 0 34 38"><path d="M4 36 V26 L12 16 L28 22 V32 L20 36 Z M4 26 L20 30 L28 22 M20 30 V36" stroke="#8c8c8c" stroke-width="2.4" fill="none" stroke-linejoin="round" stroke-linecap="round" /><path d="M17 2 V12 M4 10 C6 4 10 4 12 8 M30 10 C28 4 24 4 22 8" stroke="#78aaf0" stroke-width="2.2" fill="none" stroke-linejoin="round" stroke-linecap="round" /></svg>
<svg style="left:1826.0px;top:75.0px;" width="20.0" height="19.0" viewBox="0 0 40 38"><path d="M4 18 L20 6 L36 18 L20 32 Z M20 6 V32 M4 14 V22 L8 26" stroke="#b4b4b4" stroke-width="2.2" fill="none" stroke-linejoin="round" stroke-linecap="round" /></svg>
<div class="a" style="left:1856.0px;top:74.5px;width:1.0px;height:21.0px;background:#c2c2c2;"></div>
<svg style="left:1868.5px;top:75.0px;" width="18.0" height="19.0" viewBox="0 0 36 38"><path d="M2 10 L10 4 H24 V18 L16 26 H2 Z M2 10 H16 V26 M16 10 L24 4" stroke="#222" stroke-width="2.6" fill="none" stroke-linejoin="round" stroke-linecap="round" /><rect x="14" y="16" width="20" height="17" rx="2" stroke="#2f7ff0" stroke-width="2.4" fill="#e6e6e6"/><path d="M18 22 H20 M23 22 H30 M18 28 H20 M23 28 H30" stroke="#2f7ff0" stroke-width="2" fill="none" stroke-linejoin="round" stroke-linecap="round" /></svg>
<div class="a" style="left:1912.0px;top:74.5px;width:1.0px;height:21.0px;background:#c2c2c2;"></div>
<svg style="left:1922.0px;top:75.0px;" width="20.0" height="19.0" viewBox="0 0 40 38"><path d="M4 10 L10 4 H20 V14 M4 10 V22" stroke="#b4b4b4" stroke-width="2" fill="none" stroke-linejoin="round" stroke-linecap="round" /><rect x="12" y="14" width="22" height="20" rx="0" stroke="#222" stroke-width="2.6" fill="none"/><circle cx="12" cy="14" r="3" stroke="#222" stroke-width="2" fill="#222"/><circle cx="34" cy="14" r="3" stroke="#222" stroke-width="2" fill="#222"/><circle cx="12" cy="34" r="3" stroke="#222" stroke-width="2" fill="#222"/><circle cx="34" cy="34" r="3" stroke="#222" stroke-width="2" fill="#222"/><circle cx="23" cy="14" r="3" stroke="#222" stroke-width="2" fill="#222"/><circle cx="12" cy="24" r="3" stroke="#222" stroke-width="2" fill="#222"/><circle cx="34" cy="24" r="3" stroke="#222" stroke-width="2" fill="#222"/><circle cx="23" cy="34" r="3" stroke="#222" stroke-width="2" fill="#222"/></svg>
<svg style="left:1967.0px;top:75.0px;" width="20.0" height="19.0" viewBox="0 0 40 38"><path d="M3 28 V16 L14 4 L26 12 V24 M3 28 L14 34 L22 30 M14 16 V34 M3 16 L14 16 L26 12" stroke="#222" stroke-width="2.6" fill="none" stroke-linejoin="round" stroke-linecap="round" /><path d="M22 22 H36 L31 28 V36 H27 V28 Z" stroke="#2f7ff0" stroke-width="2.4" fill="none" stroke-linejoin="round" stroke-linecap="round" /></svg>
<svg style="left:1995.5px;top:75.0px;" width="20.0" height="19.0" viewBox="0 0 40 38"><path d="M2 28 V18 L12 10 L22 10 V28 Z" stroke="#222" stroke-width="2.6" fill="none" stroke-linejoin="round" stroke-linecap="round" /><path d="M10 12 L24 2 L38 18 L24 36 Z" stroke="#2f7ff0" stroke-width="2.2" fill="#e6e6e6" stroke-linejoin="round" stroke-linecap="round" /><path d="M16 14 L26 8 L32 18 L24 28 Z" stroke="#222" stroke-width="2.2" fill="none" stroke-linejoin="round" stroke-linecap="round" /></svg>
<div class="a" style="left:2041.0px;top:74.5px;width:1.0px;height:21.0px;background:#c2c2c2;"></div>
<svg style="left:2052.0px;top:74.0px;" width="20.0" height="20.0" viewBox="0 0 40 40"><path d="M19.7 14 V6 C19.7 1.5 25 1.5 25 6 V14" stroke="#222" stroke-width="2.4" fill="none" stroke-linejoin="round" stroke-linecap="round" /><path d="M10.3 31 V17 C10.3 15 11.5 14 13.5 14 H30 C32 14 33 15 33 17 V31 L27 36.5 H6.5 C4.5 36.5 4 35 5.5 33.5 L10.3 29" stroke="#222" stroke-width="2.4" fill="none" stroke-linejoin="round" stroke-linecap="round" /><path d="M10.3 21 H33" stroke="#222" stroke-width="2.2" fill="none" stroke-linejoin="round" stroke-linecap="round" /><path d="M11 35 L15 30.5 M16.5 35 L20.5 30.5 M22 35 L26 30.5" stroke="#222" stroke-width="2.2" fill="none" stroke-linejoin="round" stroke-linecap="round" /></svg>
<svg style="left:2081.0px;top:74.0px;" width="22.0" height="20.0" viewBox="0 0 44 40"><path d="M9 4 C6 9 4 12 4 15 C4 18.5 6.5 20 9 20 C11.5 20 14 18.5 14 15 C14 12 12 9 9 4 Z" stroke="#8c8c8c" stroke-width="2" fill="none" stroke-linejoin="round" stroke-linecap="round" /><path d="M36.2 14 V6 C36.2 1.5 41 1.5 41 6 V14" stroke="#8c8c8c" stroke-width="2.2" fill="none" stroke-linejoin="round" stroke-linecap="round" /><path d="M26 31 V17 C26 15 27 14 29 14 H41 C43 14 43.5 15 43.5 17 V30 L37.5 36.5 H4" stroke="#8c8c8c" stroke-width="2.2" fill="none" stroke-linejoin="round" stroke-linecap="round" /><path d="M26 21 H43.5" stroke="#8c8c8c" stroke-width="2" fill="none" stroke-linejoin="round" stroke-linecap="round" /><path d="M27 35 L31 30.5 M32.5 35 L36.5 30.5" stroke="#8c8c8c" stroke-width="2" fill="none" stroke-linejoin="round" stroke-linecap="round" /></svg>
<div class="a" style="left:2111.0px;top:74.5px;width:1.0px;height:21.0px;background:#c2c2c2;"></div>
<svg style="left:2122.0px;top:76.0px;" width="20.0" height="17.0" viewBox="0 0 40 34"><rect x="2" y="7" width="34" height="24" rx="3" stroke="#222" stroke-width="2.6" fill="none"/><path d="M10 7 L14 2 H24 L28 7" stroke="#222" stroke-width="2.6" fill="none" stroke-linejoin="round" stroke-linecap="round" /><circle cx="19" cy="19" r="7" stroke="#222" stroke-width="2.6" fill="none"/></svg>
<svg style="left:2166.5px;top:75.5px;" width="20.0" height="18.0" viewBox="0 0 40 36"><rect x="2" y="7" width="28" height="20" rx="3" stroke="#222" stroke-width="2.6" fill="none"/><path d="M8 7 L12 2 H20 L24 7" stroke="#222" stroke-width="2.6" fill="none" stroke-linejoin="round" stroke-linecap="round" /><circle cx="16" cy="17" r="6" stroke="#222" stroke-width="2.6" fill="none"/><rect x="17" y="17" width="21" height="17" rx="2" stroke="#2f7ff0" stroke-width="2.4" fill="#e6e6e6"/><path d="M21 23 H23 M26 23 H34 M21 28 H23 M26 28 H34" stroke="#2f7ff0" stroke-width="2" fill="none" stroke-linejoin="round" stroke-linecap="round" /></svg>
<svg style="left:2196.5px;top:75.0px;" width="19.0" height="19.0" viewBox="0 0 38 38"><path d="M8 2 V36 M28 2 V36" stroke="#2f7ff0" stroke-width="2.2" fill="none" stroke-linejoin="round" stroke-linecap="round" stroke-dasharray="5 3"/><path d="M2 20 L18 6 L34 20 M8 16 V34 H28 V16 M14 34 V24 H22 V34" stroke="#222" stroke-width="2.4" fill="none" stroke-linejoin="round" stroke-linecap="round" /></svg>
<div class="a" style="left:2226.0px;top:74.5px;width:1.0px;height:21.0px;background:#c2c2c2;"></div>
<svg style="left:2238.5px;top:76.0px;" width="18.0" height="17.0" viewBox="0 0 36 34"><rect x="3" y="10" width="24" height="16" rx="3" stroke="#222" stroke-width="2.6" fill="none"/><path d="M27 16 L34 12 V26 L27 22" stroke="#222" stroke-width="2.6" fill="none" stroke-linejoin="round" stroke-linecap="round" /><path d="M14 4 C18 2 24 2 26 6 M4 30 C6 32 10 32 12 30" stroke="#2f7ff0" stroke-width="2.2" fill="none" stroke-linejoin="round" stroke-linecap="round" /></svg>
<svg style="left:2266.5px;top:75.0px;" width="20.0" height="19.0" viewBox="0 0 40 38"><path d="M8 2 V14 M2 8 H14 M4 4 L12 12 M12 4 L4 12" stroke="#222" stroke-width="2.2" fill="none" stroke-linejoin="round" stroke-linecap="round" /><path d="M12 26 V16 L22 8 L34 16 V28 L24 36 Z M12 16 L24 20 L34 16 M24 20 V36" stroke="#222" stroke-width="2.4" fill="none" stroke-linejoin="round" stroke-linecap="round" /></svg>
<svg style="left:56.5px;top:1396.5px;" width="19.0" height="17.0" viewBox="0 0 38 34"><circle cx="22" cy="14" r="10" stroke="#2a2a2a" stroke-width="2.6" fill="none"/><path d="M4 14 H16 M8 10 L4 14 L8 18 M14 22 L6 30" stroke="#2a2a2a" stroke-width="2.6" fill="none" stroke-linejoin="round" stroke-linecap="round" /></svg>
<svg style="left:79.5px;top:1396.5px;" width="19.0" height="17.0" viewBox="0 0 38 34"><circle cx="14" cy="14" r="10" stroke="#8a8a8a" stroke-width="2.4" fill="none"/><path d="M20 14 H32 M28 10 L32 14 L28 18 M22 22 L30 30" stroke="#8a8a8a" stroke-width="2.4" fill="none" stroke-linejoin="round" stroke-linecap="round" /></svg>
<svg style="left:102.5px;top:1396.5px;" width="18.0" height="17.0" viewBox="0 0 36 34"><circle cx="15" cy="14" r="10" stroke="#2a2a2a" stroke-width="2.6" fill="none"/><path d="M10 14 H20 M15 9 V19 M22 21 L30 30" stroke="#2a2a2a" stroke-width="2.6" fill="none" stroke-linejoin="round" stroke-linecap="round" /></svg>
<svg style="left:130.5px;top:1396.5px;" width="19.0" height="17.0" viewBox="0 0 38 34"><circle cx="15" cy="14" r="10" stroke="#2a2a2a" stroke-width="2.6" fill="none"/><path d="M22 21 L30 30" stroke="#2a2a2a" stroke-width="2.6" fill="none" stroke-linejoin="round" stroke-linecap="round" /><path d="M15 6 L12 9 H18 Z M15 22 L12 19 H18 Z M7 14 L10 11 V17 Z M23 14 L20 11 V17 Z" stroke="#2a2a2a" stroke-width="1" fill="#2a2a2a" stroke-linejoin="round" stroke-linecap="round" /></svg>
<svg style="left:338.0px;top:1397.5px;" width="16.0" height="15.0" viewBox="0 0 32 30"><path d="M4 12 L12 4 L22 14 L14 22 Z" stroke="#2a2a2a" stroke-width="2.4" fill="none" stroke-linejoin="round" stroke-linecap="round" /><path d="M20 26 C24 24 26 20 26 16 M23 19 L26 15 L29 19" stroke="#2a2a2a" stroke-width="2.2" fill="none" stroke-linejoin="round" stroke-linecap="round" /></svg>
<svg style="left:543.5px;top:1399.0px;" width="17.0" height="11.0" viewBox="0 0 34 22"><rect x="2" y="4" width="28" height="12" rx="1" stroke="#2a2a2a" stroke-width="2.4" fill="none"/><path d="M8 4 V9 M13 4 V8 M18 4 V9 M23 4 V8" stroke="#2a2a2a" stroke-width="2" fill="none" stroke-linejoin="round" stroke-linecap="round" /></svg>
<svg style="left:750.0px;top:1397.0px;" width="18.0" height="16.0" viewBox="0 0 36 32"><path d="M4 8 L14 3 H32 L22 8 Z M4 15 L14 10 H32 L22 15 Z M4 22 L14 17 H32 L22 22 Z" stroke="#2a2a2a" stroke-width="2.2" fill="#e6e6e6" stroke-linejoin="round" stroke-linecap="round" /></svg>
<svg style="left:957.5px;top:1397.5px;" width="16.0" height="15.0" viewBox="0 0 32 30"><rect x="2" y="3" width="26" height="22" rx="0" stroke="#2a2a2a" stroke-width="2.4" fill="none"/><path d="M2 9 H28 M2 19 H28 M5 19 L15 9 M12 19 L22 9 M19 19 L28 10" stroke="#2a2a2a" stroke-width="1.8" fill="none" stroke-linejoin="round" stroke-linecap="round" /></svg>
<svg style="left:1166.0px;top:1396.5px;" width="11.0" height="17.0" viewBox="0 0 22 34"><path d="M3 3 V20 L11 31 L19 20 V3 M11 20 V31" stroke="#2a2a2a" stroke-width="2.4" fill="none" stroke-linejoin="round" stroke-linecap="round" /></svg>
<svg style="left:1370.0px;top:1398.0px;" width="17.0" height="13.0" viewBox="0 0 34 26"><rect x="2" y="2" width="30" height="22" rx="1" stroke="#2a2a2a" stroke-width="2.4" fill="none"/><rect x="8" y="8" width="18" height="10" rx="0" stroke="#2a2a2a" stroke-width="2.2" fill="none"/></svg>
<svg style="left:1576.5px;top:1396.5px;" width="16.0" height="17.0" viewBox="0 0 32 34"><path d="M2 10 H10 M2 10 V24 H8" stroke="#2a2a2a" stroke-width="2.2" fill="none" stroke-linejoin="round" stroke-linecap="round" /><rect x="12" y="16" width="16" height="14" rx="1" stroke="#2a2a2a" stroke-width="1.5" fill="#555"/><path d="M16 12 V4 H26 V12 M22 8 L26 12 L30 8" stroke="#2a2a2a" stroke-width="2.2" fill="none" stroke-linejoin="round" stroke-linecap="round" /></svg>
<svg style="left:1781.0px;top:1396.0px;" width="17.0" height="18.0" viewBox="0 0 34 36"><path d="M2 32 L16 8" stroke="#999" stroke-width="1.8" fill="none" stroke-linejoin="round" stroke-linecap="round" /><path d="M2 32 H26 M14 6 V4 M16 28 V16 L22 10 L28 16 V30 M20 30 V24 H24 V30" stroke="#2a2a2a" stroke-width="2.2" fill="none" stroke-linejoin="round" stroke-linecap="round" /></svg>
<svg style="left:1986.0px;top:1396.0px;" width="19.0" height="18.0" viewBox="0 0 38 36"><rect x="3" y="12" width="30" height="20" rx="1" stroke="#2a2a2a" stroke-width="2.6" fill="none"/><path d="M3 5 H33 M3 2 V8 M33 2 V8" stroke="#2a2a2a" stroke-width="2.2" fill="none" stroke-linejoin="round" stroke-linecap="round" /></svg>
<svg style="left:2397.0px;top:1416.5px;" width="19.0" height="16.0" viewBox="0 0 38 32"><rect x="10" y="10" width="26" height="20" rx="0" stroke="#2a2a2a" stroke-width="2.6" fill="none"/><path d="M3 3 H28 V10 M3 3 V22 H10" stroke="#2a2a2a" stroke-width="2.6" fill="none" stroke-linejoin="round" stroke-linecap="round" /></svg>
<div class="a" style="left:2424.5px;top:1417.0px;width:1.0px;height:14.0px;background:#c8c8c8;"></div>
<svg style="left:2142.0px;top:168.0px;" width="23.0" height="19.0" viewBox="0 0 46 38"><path d="M3 22 V12 L12 3 L22 8 L30 13 V22 Z M20 7 V22 M3 22 H30" stroke="#2a2a2a" stroke-width="2.8" fill="none" stroke-linejoin="round" stroke-linecap="round" /><path d="M32 18 V26 M36 20 H42 M36 26 H42" stroke="#2a2a2a" stroke-width="3" fill="none" stroke-linejoin="round" stroke-linecap="round" /></svg>
<div class="a" style="left:570.125px;top:104.5px;width:0.75px;height:58.5px;background:#d2d2d2;"></div>
<div class="a" style="left:753.375px;top:104.5px;width:0.75px;height:58.5px;background:#d2d2d2;"></div>
<div class="a" style="left:936.125px;top:104.5px;width:0.75px;height:58.5px;background:#d2d2d2;"></div>
<div class="a" style="left:1118.625px;top:104.5px;width:0.75px;height:58.5px;background:#d2d2d2;"></div>
<div class="a" style="left:1302.125px;top:104.5px;width:0.75px;height:58.5px;background:#d2d2d2;"></div>
<div class="a" style="left:1484.625px;top:104.5px;width:0.75px;height:58.5px;background:#d2d2d2;"></div>
<div class="a" style="left:1667.625px;top:104.5px;width:0.75px;height:58.5px;background:#d2d2d2;"></div>
<div class="a" style="left:1850.625px;top:104.5px;width:0.75px;height:58.5px;background:#d2d2d2;"></div>
<div class="a" style="left:2033.125px;top:104.5px;width:0.75px;height:58.5px;background:#d2d2d2;"></div>
<div class="a" style="left:2216.125px;top:104.5px;width:0.75px;height:58.5px;background:#d2d2d2;"></div>
<div class="a" style="left:2398.625px;top:104.5px;width:0.75px;height:58.5px;background:#d2d2d2;"></div>
<div class="a" style="left:22.0px;top:122.5px;width:1.25px;height:23.0px;background:#a8a8a8;"></div>
<div class="a" style="left:400.0px;top:128.0px;width:35.0px;height:27.0px;background:#b9b9bd;border-radius:8px;"></div>
<svg style="left:400.0px;top:129.0px;" width="25.0" height="25.0" viewBox="0 0 50 50"><path d="M20 14 H37 V40 H30" stroke="#444" stroke-width="2" fill="none" stroke-linejoin="round" stroke-linecap="round" /><rect x="33" y="37" width="8" height="8" rx="1" stroke="#222" stroke-width="1" fill="#222"/></svg>
<svg style="left:443.0px;top:129.0px;" width="23.0" height="25.0" viewBox="0 0 46 50"><path d="M4 14 C4 6 42 6 42 14 C42 18 36 20 32 20 M4 14 C4 18 10 20 14 20 M4 14 V38 C4 42 8 44 12 44 V20 M42 14 V38 C42 42 38 44 34 44 V20 M14 20 V32 H32 V20" stroke="#666" stroke-width="2" fill="none" stroke-linejoin="round" stroke-linecap="round" /><rect x="18" y="33" width="7" height="7" rx="1" stroke="#222" stroke-width="1" fill="#222"/><rect x="27" y="40" width="7" height="7" rx="1" stroke="#222" stroke-width="1" fill="#222"/><path d="M22 37 L30 43" stroke="#222" stroke-width="2" fill="none" stroke-linejoin="round" stroke-linecap="round" /></svg>
<svg style="left:489.0px;top:129.0px;" width="25.0" height="25.0" viewBox="0 0 50 50"><path d="M10 9 H46 V33 L34 43 V18 L10 12 Z M10 9 L6 13 V36 M34 18 L46 9" stroke="#555" stroke-width="2.2" fill="none" stroke-linejoin="round" stroke-linecap="round" /><path d="M6 36 L34 43" stroke="#222" stroke-width="2.4" fill="none" stroke-linejoin="round" stroke-linecap="round" /><rect x="2" y="32" width="8" height="8" rx="1" stroke="#222" stroke-width="1" fill="#222"/><rect x="30" y="39" width="8" height="8" rx="1" stroke="#222" stroke-width="1" fill="#222"/></svg>
<svg style="left:532.0px;top:128.0px;" width="27.0" height="26.0" viewBox="0 0 54 52"><path d="M4 40 V18 C6 10 14 8 24 8 H48 V30 L42 34 M4 18 C14 18 24 20 36 22 V42 M36 22 C38 16 42 12 48 8" stroke="#9a9a9a" stroke-width="1.8" fill="none" stroke-linejoin="round" stroke-linecap="round" /><path d="M4 40 L36 44" stroke="#888" stroke-width="2" fill="none" stroke-linejoin="round" stroke-linecap="round" /><rect x="1" y="36" width="7" height="7" rx="1" stroke="#888" stroke-width="1" fill="#888"/><rect x="32" y="40" width="7" height="7" rx="1" stroke="#888" stroke-width="1" fill="#888"/><rect x="44" y="27" width="7" height="7" rx="1" stroke="#888" stroke-width="1" fill="#888"/></svg>
<div class="a" style="left:576.0px;top:127.75px;width:128.75px;height:27.75px;background:#fdfdfd;border-radius:6px;box-shadow:0 0.5px 0.5px rgba(0,0,0,0.22),0 0 0 0.5px rgba(0,0,0,0.08);"></div>
<svg style="left:579.0px;top:132.5px;" width="22.0" height="20.0" viewBox="0 0 44 40"><path d="M3 3 H41 M3 9 H41 M3 37 H41" stroke="#222" stroke-width="2.8" fill="none" stroke-linejoin="round" stroke-linecap="round" /><path d="M3 15 H41 V31 H3 Z" stroke="#222" stroke-width="1.6" fill="none" stroke-linejoin="round" stroke-linecap="round" /><path d="M5 31 L17 15 M13 31 L25 15 M21 31 L33 15 M29 31 L41 15" stroke="#222" stroke-width="1.5" fill="none" stroke-linejoin="round" stroke-linecap="round" /></svg>
<div class="t" style="left:605.250px;top:135.808px;font-size:11.45px;color:#1e1e1e;font-weight:normal;transform:scaleX(0.9932);transform-origin:0 0;-webkit-text-stroke:0.22px #1e1e1e;">Core Outside</div>
<div class="a" style="left:707.0px;top:127.75px;width:41.5px;height:27.75px;background:#efefef;border-radius:6px;box-shadow:0 0.5px 0.5px rgba(0,0,0,0.12),0 0 0 0.5px rgba(0,0,0,0.05);"></div>
<svg style="left:715.0px;top:132.5px;" width="26.0" height="18.0" viewBox="0 0 52 36"><path d="M2 4 H28 M2 4 V14 H28" stroke="#666" stroke-width="1.8" fill="none" stroke-linejoin="round" stroke-linecap="round" stroke-dasharray="3 2"/><path d="M2 22 H28 V34 H2" stroke="#555" stroke-width="2" fill="none" stroke-linejoin="round" stroke-linecap="round" /><path d="M38 6 C46 10 46 20 38 24 M38 24 L36 19 M38 6 L35 10 M38 30 C44 28 46 24 44 20" stroke="#666" stroke-width="1.8" fill="none" stroke-linejoin="round" stroke-linecap="round" /></svg>
<div class="a" style="left:759.0px;top:127.75px;width:41.75px;height:27.75px;background:#fdfdfd;border-radius:6px;box-shadow:0 0.5px 0.5px rgba(0,0,0,0.22),0 0 0 0.5px rgba(0,0,0,0.08);"></div>
<svg style="left:766.0px;top:133.0px;" width="28.0" height="20.0" viewBox="0 0 56 40"><path d="M4 32 H40 M12 4 V32 M28 4 V32 M12 4 H28" stroke="#333" stroke-width="2.2" fill="none" stroke-linejoin="round" stroke-linecap="round" /><path d="M14 14 L26 6 M14 22 L26 14 M14 30 L26 22" stroke="#555" stroke-width="1.6" fill="none" stroke-linejoin="round" stroke-linecap="round" /></svg>
<div class="a" style="left:802.75px;top:127.75px;width:128.75px;height:27.75px;background:#fdfdfd;border-radius:6px;box-shadow:0 0.5px 0.5px rgba(0,0,0,0.22),0 0 0 0.5px rgba(0,0,0,0.08);"></div>
<div class="a" style="left:813.5px;top:131.0px;width:20.75px;height:20.75px;background:#d9cc9c;box-shadow:inset 0 0 0 1.3px #222;"></div>
<div class="a" style="left:817.0px;top:131.5px;width:0.75px;height:19.75px;background:#333;"></div>
<div class="t" style="left:839.250px;top:135.558px;font-size:11.45px;color:#1e1e1e;font-weight:normal;transform:scaleX(0.9477);transform-origin:0 0;-webkit-text-stroke:0.22px #1e1e1e;">Generic Wall/S...</div>
<div class="a" style="left:942.0px;top:127.75px;width:172.25px;height:27.75px;background:#fdfdfd;border-radius:6px;box-shadow:0 0.5px 0.5px rgba(0,0,0,0.22),0 0 0 0.5px rgba(0,0,0,0.08);"></div>
<svg style="left:950.0px;top:132.5px;" width="20.0" height="18.0" viewBox="0 0 40 36"><path d="M3 2 V33 H37 V23 H15 V2 Z" stroke="#222" stroke-width="2.4" fill="none" stroke-linejoin="round" stroke-linecap="round" /><path d="M3 12 L13 4 M3 22 L13 14 M3 32 L13 24 M11 33 L21 23 M21 33 L31 23 M31 33 L37 27" stroke="#222" stroke-width="1.8" fill="none" stroke-linejoin="round" stroke-linecap="round" /></svg>
<div class="t" style="left:972.250px;top:135.558px;font-size:11.45px;color:#1e1e1e;font-weight:normal;transform:scaleX(0.9531);transform-origin:0 0;-webkit-text-stroke:0.22px #1e1e1e;">Floor Plan and Section...</div>
<svg style="left:1132.0px;top:123.5px;" width="24.0" height="14.0" viewBox="0 0 48 28"><path d="M2 4 H44 L40 10 H6 Z" stroke="#777" stroke-width="1.5" fill="#8c8c8c" stroke-linejoin="round" stroke-linecap="round" /><path d="M12 14 H26 C30 14 30 22 26 22 H12 C8 22 8 14 12 14 Z M20 10 H34 C38 10 38 18 34 18 H28" stroke="#222" stroke-width="2.4" fill="none" stroke-linejoin="round" stroke-linecap="round" /></svg>
<div class="t" style="left:1167.000px;top:125.058px;font-size:11.45px;color:#1e1e1e;font-weight:normal;transform:scaleX(0.9828);transform-origin:0 0;-webkit-text-stroke:0.22px #1e1e1e;">1. Story (Home + 1)</div>
<svg style="left:1132.0px;top:145.0px;" width="24.0" height="15.0" viewBox="0 0 48 30"><path d="M16 16 L24 6 L32 16 H28 V24 H20 V16 Z" stroke="#222" stroke-width="2.4" fill="none" stroke-linejoin="round" stroke-linecap="round" /><path d="M2 26 H44 L40 30 H6 Z" stroke="#777" stroke-width="1.5" fill="#8c8c8c" stroke-linejoin="round" stroke-linecap="round" /></svg>
<div class="t" style="left:1167.000px;top:146.308px;font-size:11.45px;color:#1e1e1e;font-weight:normal;transform:scaleX(1.0048);transform-origin:0 0;-webkit-text-stroke:0.22px #1e1e1e;">0. Ground Floor (C...</div>
<div class="a" style="left:1283.75px;top:124.75px;width:14.0px;height:13.25px;background:#fcfcfc;border-radius:50%;box-shadow:0 0.5px 0.5px rgba(0,0,0,0.25),0 0 0 0.5px rgba(0,0,0,0.1);"></div>
<div class="a" style="left:1283.75px;top:145.75px;width:14.0px;height:13.25px;background:#fcfcfc;border-radius:50%;box-shadow:0 0.5px 0.5px rgba(0,0,0,0.25),0 0 0 0.5px rgba(0,0,0,0.1);"></div>
<svg style="left:1309.0px;top:124.0px;" width="38.0" height="36.0" viewBox="0 0 76 72"><path d="M2 2 H34 L40 10 H8 Z" stroke="#777" stroke-width="1.5" fill="#8c8c8c" stroke-linejoin="round" stroke-linecap="round" /><path d="M2 62 H34 L40 70 H8 Z" stroke="#777" stroke-width="1.5" fill="#8c8c8c" stroke-linejoin="round" stroke-linecap="round" /><rect x="8" y="22" width="32" height="34" rx="4" stroke="#222" stroke-width="2.6" fill="none"/><path d="M4 26 V50 H30" stroke="#222" stroke-width="2" fill="none" stroke-linejoin="round" stroke-linecap="round" /><path d="M40 14 H62 M40 58 H62" stroke="#222" stroke-width="2" fill="none" stroke-linejoin="round" stroke-linecap="round" stroke-dasharray="3 2.5"/><path d="M68 8 V20 M64 12 L68 8 L72 12 M64 16 L68 20 L72 16 M68 52 V68 M64 56 L68 52 L72 56 M64 64 L68 68 L72 64" stroke="#222" stroke-width="2.2" fill="none" stroke-linejoin="round" stroke-linecap="round" /></svg>
<div class="a" style="left:1350.5px;top:123.5px;width:109.5px;height:16.75px;background:#fff;box-shadow:0 0 0 0.5px #c8c8c8,0 0.5px 0.5px rgba(0,0,0,0.2);"></div>
<div class="a" style="left:1350.5px;top:144.25px;width:109.5px;height:16.75px;background:#fff;box-shadow:0 0 0 0.5px #c8c8c8,0 0.5px 0.5px rgba(0,0,0,0.2);"></div>
<div class="t" style="left:1355.000px;top:126.308px;font-size:11.45px;color:#1e1e1e;font-weight:normal;-webkit-text-stroke:0.22px #1e1e1e;">0</div>
<div class="t" style="left:1355.000px;top:147.058px;font-size:11.45px;color:#1e1e1e;font-weight:normal;-webkit-text-stroke:0.22px #1e1e1e;">0</div>
<div class="a" style="left:1466.0px;top:135.0px;width:14.5px;height:14.75px;background:#fcfcfc;border-radius:50%;box-shadow:0 0.5px 0.5px rgba(0,0,0,0.25),0 0 0 0.5px rgba(0,0,0,0.1);"></div>
<svg style="left:1501.0px;top:129.0px;" width="21.0" height="26.0" viewBox="0 0 42 52"><path d="M12 4 H26 V34 H12 Z M2 36 H36" stroke="#333" stroke-width="2.2" fill="none" stroke-linejoin="round" stroke-linecap="round" /><path d="M4 46 H34 M8 42 L4 46 L8 50 M30 42 L34 46 L30 50" stroke="#333" stroke-width="2.2" fill="none" stroke-linejoin="round" stroke-linecap="round" /></svg>
<div class="a" style="left:1533.25px;top:131.5px;width:129.75px;height:17.0px;background:#f0f0f0;box-shadow:0 0 0 0.5px #d5d5d5;"></div>
<div class="t" style="left:1537.000px;top:134.058px;font-size:11.45px;color:#a9a9a9;font-weight:normal;-webkit-text-stroke:0.22px #a9a9a9;">300</div>
<div class="a" style="left:1673.0px;top:127.5px;width:42.25px;height:28.5px;background:#fdfdfd;border-radius:6px;box-shadow:0 0.5px 0.5px rgba(0,0,0,0.22),0 0 0 0.5px rgba(0,0,0,0.08);"></div>
<svg style="left:1684.0px;top:134.0px;" width="20.0" height="20.0" viewBox="0 0 40 40"><path d="M10 32 V6 H26 V32 M2 34 H36" stroke="#222" stroke-width="2.6" fill="none" stroke-linejoin="round" stroke-linecap="round" /></svg>
<svg style="left:1725.0px;top:129.0px;" width="26.0" height="25.0" viewBox="0 0 52 50"><path d="M6 44 L20 4 M20 8 L30 6 L18 44 M6 44 H18" stroke="#444" stroke-width="2" fill="none" stroke-linejoin="round" stroke-linecap="round" /><path d="M22 2 L28 0" stroke="#444" stroke-width="1.6" fill="none" stroke-linejoin="round" stroke-linecap="round" /><path d="M20 48 H50" stroke="#444" stroke-width="1.8" fill="none" stroke-linejoin="round" stroke-linecap="round" stroke-dasharray="2.5 2.5"/><text x="30" y="38" font-size="20" font-family="Liberation Sans" fill="#444">α</text></svg>
<div class="a" style="left:1760.25px;top:131.5px;width:84.75px;height:17.0px;background:#f0f0f0;box-shadow:0 0 0 0.5px #d5d5d5;"></div>
<div class="t" style="left:1763.250px;top:134.058px;font-size:11.45px;color:#a9a9a9;font-weight:normal;-webkit-text-stroke:0.22px #a9a9a9;">90.00°</div>
<div class="a" style="left:1856.5px;top:127.75px;width:171.25px;height:27.75px;background:#efefef;border-radius:6px;box-shadow:0 0.5px 0.5px rgba(0,0,0,0.12),0 0 0 0.5px rgba(0,0,0,0.05);"></div>
<svg style="left:1861.0px;top:132.0px;" width="20.0" height="20.0" viewBox="0 0 40 40"><path d="M8 34 V8 H20 V34 M2 36 H34 M20 18 H28 V36" stroke="#999" stroke-width="2" fill="none" stroke-linejoin="round" stroke-linecap="round" /><path d="M10 16 L18 10 M10 24 L18 18 M10 32 L18 26" stroke="#999" stroke-width="1.6" fill="none" stroke-linejoin="round" stroke-linecap="round" /></svg>
<div class="t" style="left:1888.000px;top:135.808px;font-size:11.45px;color:#a9a9a9;font-weight:normal;transform:scaleX(1.0068);transform-origin:0 0;-webkit-text-stroke:0.22px #a9a9a9;">Profile Offset Modifiers...</div>
<div class="a" style="left:2039.0px;top:127.75px;width:41.75px;height:27.75px;background:#fdfdfd;border-radius:6px;box-shadow:0 0.5px 0.5px rgba(0,0,0,0.22),0 0 0 0.5px rgba(0,0,0,0.08);"></div>
<svg style="left:2050.5px;top:131.0px;transform:scale(0.85);transform-origin:50% 50%;" width="20.0" height="20.0" viewBox="0 0 40 40"><path d="M19.7 14 V6 C19.7 1.5 25 1.5 25 6 V14" stroke="#222" stroke-width="2.4" fill="none" stroke-linejoin="round" stroke-linecap="round" /><path d="M10.3 31 V17 C10.3 15 11.5 14 13.5 14 H30 C32 14 33 15 33 17 V31 L27 36.5 H6.5 C4.5 36.5 4 35 5.5 33.5 L10.3 29" stroke="#222" stroke-width="2.4" fill="none" stroke-linejoin="round" stroke-linecap="round" /><path d="M10.3 21 H33" stroke="#222" stroke-width="2.2" fill="none" stroke-linejoin="round" stroke-linecap="round" /><path d="M11 35 L15 30.5 M16.5 35 L20.5 30.5 M22 35 L26 30.5" stroke="#222" stroke-width="2.2" fill="none" stroke-linejoin="round" stroke-linecap="round" /></svg>
<div class="t" style="left:2084.000px;top:135.808px;font-size:11.45px;color:#1e1e1e;font-weight:normal;transform:scaleX(1.0148);transform-origin:0 0;-webkit-text-stroke:0.22px #1e1e1e;">By Building Materials</div>
<div class="t" style="left:2221.000px;top:125.058px;font-size:11.45px;color:#a0a0a0;font-weight:normal;transform:scaleX(0.9936);transform-origin:0 0;-webkit-text-stroke:0.22px #a0a0a0;">Wall Cropped</div>
<div class="t" style="left:2221.000px;top:146.308px;font-size:11.45px;color:#a0a0a0;font-weight:normal;transform:scaleX(1.0129);transform-origin:0 0;-webkit-text-stroke:0.22px #a0a0a0;">Custom Texture</div>
<div class="a" style="left:2380.5px;top:124.75px;width:14.0px;height:13.25px;background:#ededed;border-radius:50%;box-shadow:0 0.5px 0.5px rgba(0,0,0,0.15),0 0 0 0.5px rgba(0,0,0,0.06);"></div>
<div class="a" style="left:2380.5px;top:145.75px;width:14.0px;height:13.25px;background:#ededed;border-radius:50%;box-shadow:0 0.5px 0.5px rgba(0,0,0,0.15),0 0 0 0.5px rgba(0,0,0,0.06);"></div>
<div class="a" style="left:2404.5px;top:131.0px;width:145.5px;height:19.75px;background:#fdfdfd;border-radius:6px 0 0 6px;box-shadow:0 0.5px 0.5px rgba(0,0,0,0.22),0 0 0 0.5px rgba(0,0,0,0.08);"></div>
<div class="t" style="left:2412.750px;top:135.058px;font-size:11.45px;color:#1e1e1e;font-weight:normal;transform:scaleX(0.9962);transform-origin:0 0;-webkit-text-stroke:0.22px #1e1e1e;">Zone Boundary</div>
<svg style="left:794.5px;top:166.5px;" width="20.0" height="17.0" viewBox="0 0 40 34"><path d="M3 5 L24 2 L31 8 V28 L24 33 L3 30 Z M24 2 V33" stroke="#2a2a2a" stroke-width="2.4" fill="none" stroke-linejoin="round" stroke-linecap="round" /></svg>
<svg style="left:1068.5px;top:168.0px;" width="20.0" height="15.0" viewBox="0 0 40 30"><path d="M3 28 V13 L13 3 H27 L37 13 V28 Z" stroke="#2a2a2a" stroke-width="2.4" fill="none" stroke-linejoin="round" stroke-linecap="round" /></svg>
<svg style="left:479.5px;top:165.5px;" width="23.0" height="20.0" viewBox="0 0 46 40"><path d="M6 38 H32 M10 38 L14 14 H24 L28 38 M12 22 H26 M14 14 V10 C14 4 24 4 24 10 V14 M19 28 V34" stroke="#2a2a2a" stroke-width="2.4" fill="none" stroke-linejoin="round" stroke-linecap="round" /><circle cx="34" cy="6" r="5" stroke="#f0442c" stroke-width="1" fill="#f0442c"/></svg>
<div class="a" style="left:1103.5px;top:186.5px;width:31.0px;height:13.5px;background:#f5f5f5;border-radius:0 0 5px 5px;"></div>
<div class="a" style="left:1106.0px;top:194.0px;width:25.0px;height:1.25px;background:repeating-linear-gradient(90deg,#f39a3c 0 4.5px,transparent 4.5px 7px);"></div>
<div class="a" style="left:1103.5px;top:1378.5px;width:31.0px;height:16.0px;background:#f0f0f0;border-radius:5px 5px 0 0;"></div>
<div class="a" style="left:1106.5px;top:1385.5px;width:25.0px;height:1.0px;background:repeating-linear-gradient(90deg,#9c9c9c 0 4.5px,transparent 4.5px 7px);"></div>
<div class="a" style="left:54.0px;top:775.0px;width:16.0px;height:31.5px;background:#f0f0f0;border-radius:0 8px 8px 0;"></div>
<div class="a" style="left:62.0px;top:778.0px;width:1.25px;height:26.0px;background:repeating-linear-gradient(#9a9a9a 0 5px, transparent 5px 8px);"></div>
<div class="a" style="left:907.5px;top:387.5px;width:529.5px;height:1.0px;background:#8a8a8a;"></div>
<div class="a" style="left:907.5px;top:1135.5px;width:529.5px;height:1.25px;background:#6db8fa;"></div>
<div class="a" style="left:797.5px;top:498.5px;width:1.25px;height:528.0px;background:#6db8fa;"></div>
<div class="a" style="left:1546.0px;top:498.5px;width:1.0px;height:528.0px;background:#8a8a8a;"></div>
<svg style="left:1164.0px;top:387.0px;" width="16.0" height="16.0" viewBox="0 0 32 32"><path d="M2 2 H30 L16 29 Z" stroke="#4ca3f7" stroke-width="2" fill="none" stroke-linejoin="round" stroke-linecap="round" /></svg>
<svg style="left:1164.0px;top:1121.0px;" width="16.0" height="16.0" viewBox="0 0 32 32"><path d="M2 30 H30 L16 3 Z" stroke="#4ca3f7" stroke-width="2" fill="none" stroke-linejoin="round" stroke-linecap="round" /></svg>
<svg style="left:797.0px;top:754.0px;" width="16.0" height="16.0" viewBox="0 0 32 32"><path d="M2 2 V30 L29 16 Z" stroke="#4ca3f7" stroke-width="2" fill="none" stroke-linejoin="round" stroke-linecap="round" /></svg>
<svg style="left:1531.5px;top:754.0px;" width="16.0" height="16.0" viewBox="0 0 32 32"><path d="M30 2 V30 L3 16 Z" stroke="#4ca3f7" stroke-width="2" fill="none" stroke-linejoin="round" stroke-linecap="round" /></svg>
<div class="t" style="left:1099.750px;top:390.882px;font-size:9.0px;color:#1515c8;font-weight:normal;transform:scaleX(1.0076);transform-origin:0 0;-webkit-text-stroke:0.22px #1515c8;">North Elevation</div>
<div class="t" style="left:1099.000px;top:1127.131px;font-size:9.0px;color:#1515c8;font-weight:normal;transform:scaleX(0.9993);transform-origin:0 0;-webkit-text-stroke:0.22px #1515c8;">South Elevation</div>
<div class="t" style="left:800.869px;top:750.000px;font-size:9px;-webkit-text-stroke:0.25px #1515c8;color:#1515c8;transform-origin:0 0;transform:rotate(-90deg) scaleX(1.0023);">West Elevation</div>
<div class="t" style="left:1535.619px;top:748.500px;font-size:9px;-webkit-text-stroke:0.25px #1515c8;color:#1515c8;transform-origin:0 0;transform:rotate(-90deg) scaleX(0.9820);">East Elevation</div>
<svg style="left:925.5px;top:1000.0px;" width="9.0" height="9.0" viewBox="0 0 18 18"><path d="M2 2 L16 16 M16 2 L2 16" stroke="#333" stroke-width="3.2" fill="none" stroke-linejoin="round" stroke-linecap="round" /></svg>
<div class="a" style="left:28.5px;top:168.0px;width:15.0px;height:1.0px;background:#b8b8b8;"></div>
<svg style="left:61.5px;top:166.5px;" width="20.0" height="17.0" viewBox="0 0 40 34"><rect x="2" y="2" width="15" height="12" rx="2" stroke="#333" stroke-width="2.4" fill="none"/><rect x="22" y="2" width="15" height="12" rx="2" stroke="#333" stroke-width="2.4" fill="none"/><rect x="2" y="19" width="15" height="12" rx="2" stroke="#333" stroke-width="2.4" fill="none"/><rect x="22" y="19" width="15" height="12" rx="2" stroke="#333" stroke-width="2.4" fill="none"/></svg>
<svg style="left:22.0px;top:171.5px;" width="28.0" height="24.0" viewBox="0 0 56 48"><path d="M20 6 L38 24 L29 25 L34 36 L30 38 L25 27 L20 33 Z" stroke="#333" stroke-width="2.2" fill="#6f7377" stroke-linejoin="round" stroke-linecap="round" /></svg>
<svg style="left:22.0px;top:200.5px;" width="28.0" height="24.0" viewBox="0 0 56 48"><rect x="12" y="9" width="32" height="30" stroke="#333" stroke-width="2.4" fill="none" stroke-dasharray="4.5 3"/></svg>
<div class="a" style="left:18.0px;top:227.5px;width:36.0px;height:19.25px;background:#d6d6d6;"></div>
<div class="t" style="left:18.500px;top:231.681px;font-size:11.6px;color:#2a2a2a;font-weight:normal;transform:scaleX(0.9555);transform-origin:0 0;-webkit-text-stroke:0.2px #2a2a2a;">Design</div>
<div class="a" style="left:19.25px;top:249.5px;width:34.25px;height:25.0px;background:#b9b9bd;border-radius:8px;"></div>
<svg style="left:22.0px;top:249.5px;" width="28.0" height="24.0" viewBox="0 0 56 48"><path d="M10 10 L46 6 V30 L10 42 Z" stroke="#262626" stroke-width="2.6" fill="#f4f4f4" stroke-linejoin="round" stroke-linecap="round" /></svg>
<svg style="left:22.0px;top:277.5px;" width="28.0" height="24.0" viewBox="0 0 56 48"><path d="M21 8 C21 4 35 4 35 8 V40 C35 45 21 45 21 40 Z M21 8 C21 12 35 12 35 8" stroke="#262626" stroke-width="2.4" fill="#f6f6f6" stroke-linejoin="round" stroke-linecap="round" /></svg>
<svg style="left:22.0px;top:305.5px;" width="28.0" height="24.0" viewBox="0 0 56 48"><path d="M6 8 L48 24 V34 L8 18 Z M6 8 V18 M6 14 L10 14 M44 26 V34" stroke="#262626" stroke-width="2.2" fill="none" stroke-linejoin="round" stroke-linecap="round" /></svg>
<svg style="left:22.0px;top:331.5px;" width="28.0" height="24.0" viewBox="0 0 56 48"><path d="M6 32 L18 26 L16 22 L26 18 L32 16 L52 24 L26 38 Z" stroke="#262626" stroke-width="2.2" fill="none" stroke-linejoin="round" stroke-linecap="round" /></svg>
<svg style="left:22.0px;top:359.5px;" width="28.0" height="24.0" viewBox="0 0 56 48"><path d="M4 28 L16 12 H36 L44 24 L52 30 L34 26 L22 40 Z M36 12 L34 26" stroke="#262626" stroke-width="2.2" fill="none" stroke-linejoin="round" stroke-linecap="round" /></svg>
<svg style="left:22.0px;top:387.5px;" width="28.0" height="24.0" viewBox="0 0 56 48"><path d="M4 18 C18 26 34 22 50 8 L42 36 L30 28 L18 40 Z M50 8 L30 28" stroke="#262626" stroke-width="2.2" fill="none" stroke-linejoin="round" stroke-linecap="round" /></svg>
<svg style="left:22.0px;top:415.5px;" width="28.0" height="24.0" viewBox="0 0 56 48"><path d="M6 12 L20 8 L26 14 V18 L34 22 V26 L42 30 V34 L50 36 L36 42 L30 36 V32 L22 28 V24 L14 20 V16 Z M14 16 L26 14 M22 24 L34 22 M30 32 L42 30 M20 8 L14 12 V16" stroke="#262626" stroke-width="2.0" fill="none" stroke-linejoin="round" stroke-linecap="round" /></svg>
<svg style="left:22.0px;top:443.25px;" width="28.0" height="24.0" viewBox="0 0 56 48"><path d="M10 40 V22 L48 10 V30 M10 22 L48 16 M22 18 V36 M34 14 V32" stroke="#262626" stroke-width="2.2" fill="none" stroke-linejoin="round" stroke-linecap="round" /></svg>
<svg style="left:22.0px;top:471.25px;" width="28.0" height="24.0" viewBox="0 0 56 48"><path d="M10 10 L48 6 V34 L10 42 Z M10 20 L48 16 M10 32 L48 26 M22 9 V40 M34 8 V38" stroke="#262626" stroke-width="2.2" fill="none" stroke-linejoin="round" stroke-linecap="round" /></svg>
<svg style="left:22.0px;top:499.0px;" width="28.0" height="24.0" viewBox="0 0 56 48"><path d="M18 10 L38 6 V36 L18 42 Z M24 26 L28 24" stroke="#262626" stroke-width="2.2" fill="none" stroke-linejoin="round" stroke-linecap="round" /></svg>
<svg style="left:22.0px;top:527.0px;" width="28.0" height="24.0" viewBox="0 0 56 48"><path d="M12 12 L44 8 V34 L12 40 Z M28 10 V38 M12 26 L44 22" stroke="#262626" stroke-width="2.2" fill="none" stroke-linejoin="round" stroke-linecap="round" /></svg>
<svg style="left:22.0px;top:554.5px;" width="28.0" height="24.0" viewBox="0 0 56 48"><path d="M8 12 L28 6 L50 18 L30 26 Z M8 16 L30 30 L50 22 M30 30 V26" stroke="#262626" stroke-width="2.2" fill="none" stroke-linejoin="round" stroke-linecap="round" /></svg>
<svg style="left:22.0px;top:582.0px;" width="28.0" height="24.0" viewBox="0 0 56 48"><path d="M12 12 H44 V34 L12 40 Z M20 12 V38 M44 34 L38 38" stroke="#262626" stroke-width="2.2" fill="none" stroke-linejoin="round" stroke-linecap="round" /></svg>
<svg style="left:22.0px;top:610.0px;" width="28.0" height="24.0" viewBox="0 0 56 48"><path d="M8 40 V6 H18 L14 18 H20 V24 H40 V14 H50 V40 H40 V34 H18 V40 Z M22 26 H38 M22 30 H38" stroke="#262626" stroke-width="2.2" fill="none" stroke-linejoin="round" stroke-linecap="round" /></svg>
<svg style="left:22.0px;top:637.0px;" width="28.0" height="24.0" viewBox="0 0 56 48"><path d="M4 14 C16 10 26 12 36 8 L50 30 C40 32 30 36 24 40 C20 30 14 20 4 14 Z M14 11 C22 22 28 30 30 38 M26 10 C32 20 38 26 42 33 M10 20 C20 18 30 18 42 14 M16 28 C26 26 36 26 46 22" stroke="#262626" stroke-width="2" fill="none" stroke-linejoin="round" stroke-linecap="round" /></svg>
<svg style="left:22.0px;top:665.0px;" width="28.0" height="24.0" viewBox="0 0 56 48"><path d="M16 34 C14 18 26 8 40 6 C36 16 38 26 44 32 C36 36 28 40 22 42 Z M16 34 L22 42 M40 6 L34 30 L44 32" stroke="#262626" stroke-width="2.2" fill="none" stroke-linejoin="round" stroke-linecap="round" /></svg>
<svg style="left:22.0px;top:692.5px;" width="28.0" height="24.0" viewBox="0 0 56 48"><path d="M16 42 V8 C16 4 26 4 28 8 V26 H44 V42 M16 26 H28 M28 26 L22 30 H44" stroke="#262626" stroke-width="2.2" fill="none" stroke-linejoin="round" stroke-linecap="round" /></svg>
<svg style="left:22.0px;top:719.5px;" width="28.0" height="24.0" viewBox="0 0 56 48"><circle cx="28" cy="20" r="9" stroke="#262626" stroke-width="2.2" fill="none"/><path d="M24 30 V38 H32 V30 M25 18 L28 22 L31 18 M8 20 H14 M42 20 H48 M14 8 L18 12 M42 8 L38 12 M14 32 L18 28 M42 32 L38 28" stroke="#262626" stroke-width="2.2" fill="none" stroke-linejoin="round" stroke-linecap="round" /></svg>
<svg style="left:22.0px;top:748.0px;" width="28.0" height="24.0" viewBox="0 0 56 48"><path d="M14 14 L26 8 H42 V36 L30 42 H14 Z M14 14 H30 V42 M30 14 L42 8 M22 10 L32 12" stroke="#262626" stroke-width="2.2" fill="none" stroke-linejoin="round" stroke-linecap="round" /><path d="M18 42 V46 M24 42 V46" stroke="#262626" stroke-width="1.6" fill="none" stroke-linejoin="round" stroke-linecap="round" /></svg>
<svg style="left:22.0px;top:775.0px;" width="28.0" height="24.0" viewBox="0 0 56 48"><path d="M8 12 H48 V34 L8 38 Z M22 12 V37 M36 12 V35 M8 24 H48" stroke="#262626" stroke-width="2.2" fill="none" stroke-linejoin="round" stroke-linecap="round" /></svg>
<svg style="left:22.0px;top:803.5px;" width="28.0" height="24.0" viewBox="0 0 56 48"><path d="M12 10 L46 6 V34 L12 42 Z M24 9 V40" stroke="#262626" stroke-width="2.2" fill="none" stroke-linejoin="round" stroke-linecap="round" /></svg>
<div class="a" style="left:18.0px;top:830.0px;width:36.0px;height:19.75px;background:#d6d6d6;"></div>
<div class="a" style="left:18px;top:830px;width:36px;height:20px;overflow:hidden;">
<div class="t" style="left:0.500px;top:4.181px;font-size:11.6px;color:#2a2a2a;font-weight:normal;transform:scaleX(1.0981);transform-origin:0 0;-webkit-text-stroke:0.2px #2a2a2a;">Viewpoint</div>
</div>
<svg style="left:22.0px;top:852.5px;" width="28.0" height="24.0" viewBox="0 0 56 48"><path d="M6 14 H28 V22 H50 M30 22 V18" stroke="#262626" stroke-width="2.2" fill="none" stroke-linejoin="round" stroke-linecap="round" /><path d="M10 12 L14 6 L18 12 Z M40 20 L44 14 L48 20 Z" stroke="#262626" stroke-width="1.6" fill="#262626" stroke-linejoin="round" stroke-linecap="round" /></svg>
<svg style="left:22.0px;top:880.5px;" width="28.0" height="24.0" viewBox="0 0 56 48"><path d="M6 36 H50" stroke="#262626" stroke-width="2.4" fill="none" stroke-linejoin="round" stroke-linecap="round" /><path d="M20 30 L28 18 L36 30 Z" stroke="#262626" stroke-width="1.6" fill="#262626" stroke-linejoin="round" stroke-linecap="round" /></svg>
<svg style="left:22.0px;top:908.5px;" width="28.0" height="24.0" viewBox="0 0 56 48"><circle cx="28" cy="24" r="7" stroke="#262626" stroke-width="2.2" fill="none"/><path d="M28 6 L24 11 H32 Z M28 42 L24 37 H32 Z M10 24 L15 20 V28 Z M46 24 L41 20 V28 Z" stroke="#262626" stroke-width="1" fill="#262626" stroke-linejoin="round" stroke-linecap="round" /></svg>
<svg style="left:22.0px;top:936.0px;" width="28.0" height="24.0" viewBox="0 0 56 48"><circle cx="28" cy="24" r="17" stroke="#262626" stroke-width="2.2" fill="none"/><path d="M20 8 V40 M20 16 H26 V32 H20 M26 24 H44 M34 10 V40" stroke="#262626" stroke-width="2.2" fill="none" stroke-linejoin="round" stroke-linecap="round" /></svg>
<svg style="left:22.0px;top:963.5px;" width="28.0" height="24.0" viewBox="0 0 56 48"><path d="M6 8 H36 L48 18 V40 H6 Z M14 34 L30 18 L34 22 L18 38 Z M28 36 H42" stroke="#262626" stroke-width="2.2" fill="none" stroke-linejoin="round" stroke-linecap="round" /></svg>
<svg style="left:22.0px;top:991.5px;" width="28.0" height="24.0" viewBox="0 0 56 48"><rect x="14" y="8" width="24" height="18" rx="0" stroke="#262626" stroke-width="2.2" fill="none"/><path d="M38 14 L46 8 V26 L38 20 M26 26 V34 L14 44 M26 34 L38 44 M26 34 V44" stroke="#262626" stroke-width="2.2" fill="none" stroke-linejoin="round" stroke-linecap="round" /></svg>
<div class="a" style="left:18.0px;top:1019.0px;width:36.0px;height:19.0px;background:#d6d6d6;"></div>
<div class="a" style="left:18px;top:1019px;width:36px;height:19px;overflow:hidden;">
<div class="t" style="left:0.500px;top:4.181px;font-size:11.6px;color:#2a2a2a;font-weight:normal;transform:scaleX(1.0403);transform-origin:0 0;-webkit-text-stroke:0.2px #2a2a2a;">Document</div>
</div>
<svg style="left:22.0px;top:1041.0px;" width="28.0" height="24.0" viewBox="0 0 56 48"><path d="M8 32 H48 M8 26 V38 M48 26 V38" stroke="#262626" stroke-width="2.2" fill="none" stroke-linejoin="round" stroke-linecap="round" /><text x="17" y="22" font-size="14" font-weight="bold" font-family="Liberation Sans" fill="#262626">1.2</text></svg>
<svg style="left:22.0px;top:1068.0px;" width="28.0" height="24.0" viewBox="0 0 56 48"><circle cx="24" cy="26" r="12" stroke="#262626" stroke-width="2.2" fill="none"/><path d="M24 8 V44 M6 26 H42" stroke="#262626" stroke-width="2.2" fill="none" stroke-linejoin="round" stroke-linecap="round" /><text x="30" y="14" font-size="14" font-weight="bold" font-family="Liberation Sans" fill="#262626">1.2</text></svg>
<svg style="left:22.0px;top:1095.5px;" width="28.0" height="24.0" viewBox="0 0 56 48"><path d="M10 18 C20 24 24 34 22 46 M18 30 L34 14 H48 M18 30 V22 M18 30 H26" stroke="#262626" stroke-width="2.2" fill="none" stroke-linejoin="round" stroke-linecap="round" /><text x="26" y="12" font-size="14" font-weight="bold" font-family="Liberation Sans" fill="#262626">1.2</text></svg>
<svg style="left:22.0px;top:1124.0px;" width="28.0" height="24.0" viewBox="0 0 56 48"><path d="M6 40 L34 12 M6 40 H44 M20 28 C26 30 28 34 28 40 M24 32 L28 40 L32 34" stroke="#262626" stroke-width="2.2" fill="none" stroke-linejoin="round" stroke-linecap="round" /><text x="38" y="20" font-size="16" font-family="Liberation Sans" fill="#262626">α</text></svg>
<svg style="left:22.0px;top:1153.0px;" width="28.0" height="24.0" viewBox="0 0 56 48"><path d="M14 42 L28 8 L42 42 M19 30 H37" stroke="#262626" stroke-width="2.4" fill="none" stroke-linejoin="round" stroke-linecap="round" /></svg>
<svg style="left:22.0px;top:1179.5px;" width="28.0" height="24.0" viewBox="0 0 56 48"><path d="M8 40 L20 28 M8 40 V32 M8 40 H16 M20 28 C22 26 24 24 28 24" stroke="#262626" stroke-width="2.4" fill="none" stroke-linejoin="round" stroke-linecap="round" /><text x="24" y="38" font-size="19" font-family="Liberation Sans" fill="#262626">A1</text></svg>
<svg style="left:22.0px;top:1207.0px;" width="28.0" height="24.0" viewBox="0 0 56 48"><circle cx="28" cy="14" r="9" stroke="#262626" stroke-width="2.2" fill="none"/><path d="M28 24 V44" stroke="#262626" stroke-width="2" fill="none" stroke-linejoin="round" stroke-linecap="round" stroke-dasharray="3 3"/><text x="24" y="19" font-size="11" font-weight="bold" font-family="Liberation Sans" fill="#262626">1</text></svg>
<svg style="left:22.0px;top:1233.5px;" width="28.0" height="24.0" viewBox="0 0 56 48"><path d="M14 36 C4 36 4 22 12 20 C10 10 22 6 28 12 C34 6 46 10 44 20 C52 22 50 34 42 34 C40 42 30 44 26 38 C22 44 14 42 14 36 Z" stroke="#262626" stroke-width="2.2" fill="none" stroke-linejoin="round" stroke-linecap="round" /><path d="M18 22 H44 V30 H28 V40 H18 Z" stroke="#262626" stroke-width="2.2" fill="none" stroke-linejoin="round" stroke-linecap="round" /><path d="M18 30 L26 22 M24 30 L32 22 M30 30 L38 22 M36 30 L44 22 M42 30 L50 22 M48 30 L56 22 " stroke="#262626" stroke-width="1.4" fill="none" stroke-linejoin="round" stroke-linecap="round" /></svg>
<svg style="left:22.0px;top:1262.5px;" width="28.0" height="24.0" viewBox="0 0 56 48"><path d="M8 40 L24 12 H46 L34 26 L46 40 Z" stroke="#262626" stroke-width="2.4" fill="none" stroke-linejoin="round" stroke-linecap="round" /><path d="M12 40 L28 14 M20 40 L34 16 M28 40 L40 18" stroke="#262626" stroke-width="1.8" fill="none" stroke-linejoin="round" stroke-linecap="round" /></svg>
<svg style="left:22.0px;top:1289.5px;" width="28.0" height="24.0" viewBox="0 0 56 48"><path d="M10 40 L46 8" stroke="#262626" stroke-width="2.4" fill="none" stroke-linejoin="round" stroke-linecap="round" /></svg>
<svg style="left:22.0px;top:1317.0px;" width="28.0" height="24.0" viewBox="0 0 56 48"><circle cx="28" cy="24" r="17" stroke="#262626" stroke-width="2.4" fill="none"/></svg>
<svg style="left:22.0px;top:1343.5px;" width="28.0" height="25.0" viewBox="0 0 56 50"><path d="M8 44 V18 L20 6 H46 L30 22 M8 44 H50" stroke="#262626" stroke-width="2.4" fill="none" stroke-linejoin="round" stroke-linecap="round" /></svg>
<svg style="left:22.0px;top:1372.0px;" width="28.0" height="24.0" viewBox="0 0 56 48"><path d="M6 40 C10 24 18 8 24 14 C28 20 24 40 32 36 C38 32 40 22 48 28 V34" stroke="#262626" stroke-width="2.4" fill="none" stroke-linejoin="round" stroke-linecap="round" /></svg>
<svg style="left:22.0px;top:1401.5px;" width="28.0" height="15.0" viewBox="0 0 56 30"><path d="M28 4 V20 M14 8 L24 18 M42 8 L32 18 M6 22 H50" stroke="#262626" stroke-width="2.4" fill="none" stroke-linejoin="round" stroke-linecap="round" /><circle cx="28" cy="21" r="4" stroke="#262626" stroke-width="2.2" fill="#f2f2f2"/></svg>
<svg style="left:2191.5px;top:180.5px;" width="19.0" height="16.0" viewBox="0 0 38 32"><path d="M2 29 V14 L13 3 L24 11 L35 17 V29 Z M24 11 V29 M2 29 H35" stroke="#222" stroke-width="2.6" fill="none" stroke-linejoin="round" stroke-linecap="round" /></svg>
<div class="a" style="left:2222.5px;top:178.5px;width:1.0px;height:20.5px;background:#cfcfcf;"></div>
<div class="a" style="left:2228.5px;top:174.0px;width:28.0px;height:27.5px;background:#b9b9bd;border-radius:8px;"></div>
<svg style="left:2232.5px;top:180.0px;" width="20.0" height="16.0" viewBox="0 0 40 32"><path d="M2 2 H38 V30 H2 Z" stroke="#222" stroke-width="2.6" fill="none" stroke-linejoin="round" stroke-linecap="round" /><path d="M7 26 V15 L15 7 L22 12 L31 16 V26 Z M22 12 V26" stroke="#222" stroke-width="2.4" fill="none" stroke-linejoin="round" stroke-linecap="round" /></svg>
<svg style="left:2262.5px;top:180.0px;" width="20.0" height="16.0" viewBox="0 0 40 32"><path d="M3 29 V8 L9 2 V22 L3 29 M9 2 L36 10 V29 H3 M22 22 H36 M22 22 V29" stroke="#222" stroke-width="2.6" fill="none" stroke-linejoin="round" stroke-linecap="round" /></svg>
<svg style="left:2294.0px;top:178.5px;" width="17.0" height="19.0" viewBox="0 0 34 38"><path d="M8 6 H26 V30 H8 Z M3 2 H22 V26 M8 30 q0 4 4 4 H30 V10" stroke="#222" stroke-width="2.6" fill="none" stroke-linejoin="round" stroke-linecap="round" /></svg>
<div class="a" style="left:2509.0px;top:177.0px;width:33.5px;height:21.0px;background:#fafafa;border-radius:9px;box-shadow:0 0 0 0.5px #cfcfcf;"></div>
<svg style="left:2516.5px;top:182.0px;" width="18.0" height="11.0" viewBox="0 0 36 22"><path d="M4 3 H32 M4 11 H32 M4 19 H32" stroke="#222" stroke-width="2.6" fill="none" stroke-linejoin="round" stroke-linecap="round" /></svg>
<div class="a" style="left:2330.0px;top:168.5px;width:68.5px;height:1.25px;background:#b5b5b5;border-radius:2px;"></div>
<div class="a" style="left:2187.0px;top:208.5px;width:355.5px;height:20.5px;background:#fff;box-shadow:inset 0 0 0 1px #c9c9c9;"></div>
<div class="t" style="left:2191.500px;top:213.265px;font-size:11.5px;color:#a8a8a8;font-weight:normal;transform:scaleX(1.0009);transform-origin:0 0;-webkit-text-stroke:0.22px #a8a8a8;">Search View Map</div>
<svg style="left:2188.5px;top:240.8px;" width="9.0" height="6.0" viewBox="0 0 18 12"><path d="M2 2 L9 9 L16 2" stroke="#555" stroke-width="2.4" fill="none" stroke-linejoin="round" stroke-linecap="round" /></svg>
<svg style="left:2203.0px;top:236.3px;" width="18.0" height="17.0" viewBox="0 0 36 34"><path d="M2 2 H34 V30 H2 Z" stroke="#2f7ff0" stroke-width="2.4" fill="#fff" stroke-linejoin="round" stroke-linecap="round" /><path d="M8 26 V16 L15 8 L22 13 L29 17 V26 Z M22 13 V26" stroke="#2f7ff0" stroke-width="2.4" fill="none" stroke-linejoin="round" stroke-linecap="round" /></svg>
<div class="t" style="left:2225.000px;top:239.373px;font-size:11.55px;color:#1e1e1e;font-weight:normal;-webkit-text-stroke:0.22px #1e1e1e;">Untitled</div>
<svg style="left:2216.75px;top:259.99px;" width="18.0" height="17.0" viewBox="0 0 36 34"><path d="M2 27 V4 Q2 2 4 2 H16 Q18 2 18 4 V12 H32 Q34 12 34 14 V27 Q34 29 32 29 H4 Q2 29 2 27 Z" stroke="#2f7ff0" stroke-width="2.6" fill="#ffffff" stroke-linejoin="round" stroke-linecap="round" /><path d="M7 5 V9 L11 5" stroke="#2f7ff0" stroke-width="1.8" fill="none" stroke-linejoin="round" stroke-linecap="round" /></svg>
<div class="t" style="left:2238.750px;top:263.063px;font-size:11.55px;color:#1e1e1e;font-weight:normal;-webkit-text-stroke:0.22px #1e1e1e;">Site</div>
<svg style="left:2202.25px;top:288.18px;" width="9.0" height="6.0" viewBox="0 0 18 12"><path d="M2 2 L9 9 L16 2" stroke="#555" stroke-width="2.4" fill="none" stroke-linejoin="round" stroke-linecap="round" /></svg>
<svg style="left:2216.75px;top:283.68px;" width="18.0" height="17.0" viewBox="0 0 36 34"><path d="M2 27 V4 Q2 2 4 2 H16 Q18 2 18 4 V12 H32 Q34 12 34 14 V27 Q34 29 32 29 H4 Q2 29 2 27 Z" stroke="#2f7ff0" stroke-width="2.6" fill="#dfeafa" stroke-linejoin="round" stroke-linecap="round" /><path d="M7 5 V9 L11 5" stroke="#2f7ff0" stroke-width="1.8" fill="none" stroke-linejoin="round" stroke-linecap="round" /><rect x="0" y="20" width="12" height="14" fill="#fff"/><path d="M4 33 C4 28 6 25 11 25" stroke="#1e1e1e" stroke-width="3.4" fill="none" stroke-linejoin="round" stroke-linecap="round" /><path d="M9 21 L15 25 L9 29 Z" stroke="#1e1e1e" stroke-width="1.2" fill="#1e1e1e" stroke-linejoin="round" stroke-linecap="round" /></svg>
<div class="t" style="left:2238.750px;top:286.753px;font-size:11.55px;color:#1e1e1e;font-weight:normal;-webkit-text-stroke:0.22px #1e1e1e;">Floor Plans</div>
<svg style="left:2230.5px;top:307.37px;" width="18.0" height="17.0" viewBox="0 0 36 34"><path d="M2 27 V4 Q2 2 4 2 H16 Q18 2 18 4 V12 H32 Q34 12 34 14 V27 Q34 29 32 29 H4 Q2 29 2 27 Z" stroke="#2f7ff0" stroke-width="2.6" fill="#ffffff" stroke-linejoin="round" stroke-linecap="round" /><path d="M7 5 V9 L11 5" stroke="#2f7ff0" stroke-width="1.8" fill="none" stroke-linejoin="round" stroke-linecap="round" /></svg>
<div class="t" style="left:2252.500px;top:310.443px;font-size:11.55px;color:#1e1e1e;font-weight:normal;-webkit-text-stroke:0.22px #1e1e1e;">2. Story</div>
<svg style="left:2230.5px;top:331.06px;" width="18.0" height="17.0" viewBox="0 0 36 34"><path d="M2 27 V4 Q2 2 4 2 H16 Q18 2 18 4 V12 H32 Q34 12 34 14 V27 Q34 29 32 29 H4 Q2 29 2 27 Z" stroke="#2f7ff0" stroke-width="2.6" fill="#ffffff" stroke-linejoin="round" stroke-linecap="round" /><path d="M7 5 V9 L11 5" stroke="#2f7ff0" stroke-width="1.8" fill="none" stroke-linejoin="round" stroke-linecap="round" /></svg>
<div class="t" style="left:2252.500px;top:334.133px;font-size:11.55px;color:#1e1e1e;font-weight:normal;-webkit-text-stroke:0.22px #1e1e1e;">1. Story</div>
<svg style="left:2230.5px;top:354.75px;" width="18.0" height="17.0" viewBox="0 0 36 34"><path d="M2 27 V4 Q2 2 4 2 H16 Q18 2 18 4 V12 H32 Q34 12 34 14 V27 Q34 29 32 29 H4 Q2 29 2 27 Z" stroke="#2f7ff0" stroke-width="2.6" fill="#ffffff" stroke-linejoin="round" stroke-linecap="round" /><path d="M7 5 V9 L11 5" stroke="#2f7ff0" stroke-width="1.8" fill="none" stroke-linejoin="round" stroke-linecap="round" /></svg>
<div class="t" style="left:2252.500px;top:357.823px;font-size:11.55px;color:#1e1e1e;font-weight:normal;-webkit-text-stroke:0.22px #1e1e1e;">0. Ground Floor</div>
<svg style="left:2202.25px;top:382.94px;" width="9.0" height="6.0" viewBox="0 0 18 12"><path d="M2 2 L9 9 L16 2" stroke="#555" stroke-width="2.4" fill="none" stroke-linejoin="round" stroke-linecap="round" /></svg>
<svg style="left:2216.75px;top:378.44px;" width="18.0" height="17.0" viewBox="0 0 36 34"><path d="M2 27 V4 Q2 2 4 2 H16 Q18 2 18 4 V12 H32 Q34 12 34 14 V27 Q34 29 32 29 H4 Q2 29 2 27 Z" stroke="#2f7ff0" stroke-width="2.6" fill="#dfeafa" stroke-linejoin="round" stroke-linecap="round" /><path d="M7 5 V9 L11 5" stroke="#2f7ff0" stroke-width="1.8" fill="none" stroke-linejoin="round" stroke-linecap="round" /><rect x="0" y="20" width="12" height="14" fill="#fff"/><path d="M4 33 C4 28 6 25 11 25" stroke="#1e1e1e" stroke-width="3.4" fill="none" stroke-linejoin="round" stroke-linecap="round" /><path d="M9 21 L15 25 L9 29 Z" stroke="#1e1e1e" stroke-width="1.2" fill="#1e1e1e" stroke-linejoin="round" stroke-linecap="round" /></svg>
<div class="t" style="left:2238.750px;top:381.513px;font-size:11.55px;color:#1e1e1e;font-weight:normal;-webkit-text-stroke:0.22px #1e1e1e;">Ceiling Plans</div>
<svg style="left:2230.5px;top:402.13px;" width="18.0" height="17.0" viewBox="0 0 36 34"><path d="M2 27 V4 Q2 2 4 2 H16 Q18 2 18 4 V12 H32 Q34 12 34 14 V27 Q34 29 32 29 H4 Q2 29 2 27 Z" stroke="#2f7ff0" stroke-width="2.6" fill="#ffffff" stroke-linejoin="round" stroke-linecap="round" /><path d="M7 5 V9 L11 5" stroke="#2f7ff0" stroke-width="1.8" fill="none" stroke-linejoin="round" stroke-linecap="round" /></svg>
<div class="t" style="left:2252.500px;top:405.203px;font-size:11.55px;color:#1e1e1e;font-weight:normal;-webkit-text-stroke:0.22px #1e1e1e;">2. Story</div>
<svg style="left:2230.5px;top:425.82px;" width="18.0" height="17.0" viewBox="0 0 36 34"><path d="M2 27 V4 Q2 2 4 2 H16 Q18 2 18 4 V12 H32 Q34 12 34 14 V27 Q34 29 32 29 H4 Q2 29 2 27 Z" stroke="#2f7ff0" stroke-width="2.6" fill="#ffffff" stroke-linejoin="round" stroke-linecap="round" /><path d="M7 5 V9 L11 5" stroke="#2f7ff0" stroke-width="1.8" fill="none" stroke-linejoin="round" stroke-linecap="round" /></svg>
<div class="t" style="left:2252.500px;top:428.893px;font-size:11.55px;color:#1e1e1e;font-weight:normal;-webkit-text-stroke:0.22px #1e1e1e;">1. Story</div>
<svg style="left:2230.5px;top:449.51px;" width="18.0" height="17.0" viewBox="0 0 36 34"><path d="M2 27 V4 Q2 2 4 2 H16 Q18 2 18 4 V12 H32 Q34 12 34 14 V27 Q34 29 32 29 H4 Q2 29 2 27 Z" stroke="#2f7ff0" stroke-width="2.6" fill="#ffffff" stroke-linejoin="round" stroke-linecap="round" /><path d="M7 5 V9 L11 5" stroke="#2f7ff0" stroke-width="1.8" fill="none" stroke-linejoin="round" stroke-linecap="round" /></svg>
<div class="t" style="left:2252.500px;top:452.583px;font-size:11.55px;color:#1e1e1e;font-weight:normal;-webkit-text-stroke:0.22px #1e1e1e;">0. Ground Floor</div>
<svg style="left:2202.25px;top:477.7px;" width="9.0" height="6.0" viewBox="0 0 18 12"><path d="M2 2 L9 9 L16 2" stroke="#555" stroke-width="2.4" fill="none" stroke-linejoin="round" stroke-linecap="round" /></svg>
<svg style="left:2216.75px;top:473.2px;" width="18.0" height="17.0" viewBox="0 0 36 34"><path d="M2 27 V4 Q2 2 4 2 H16 Q18 2 18 4 V12 H32 Q34 12 34 14 V27 Q34 29 32 29 H4 Q2 29 2 27 Z" stroke="#2f7ff0" stroke-width="2.6" fill="#dfeafa" stroke-linejoin="round" stroke-linecap="round" /><path d="M7 5 V9 L11 5" stroke="#2f7ff0" stroke-width="1.8" fill="none" stroke-linejoin="round" stroke-linecap="round" /><rect x="0" y="20" width="12" height="14" fill="#fff"/><path d="M4 33 C4 28 6 25 11 25" stroke="#1e1e1e" stroke-width="3.4" fill="none" stroke-linejoin="round" stroke-linecap="round" /><path d="M9 21 L15 25 L9 29 Z" stroke="#1e1e1e" stroke-width="1.2" fill="#1e1e1e" stroke-linejoin="round" stroke-linecap="round" /></svg>
<div class="t" style="left:2238.750px;top:476.273px;font-size:11.55px;color:#1e1e1e;font-weight:normal;-webkit-text-stroke:0.22px #1e1e1e;">Structural Plans</div>
<svg style="left:2230.5px;top:496.89px;" width="18.0" height="17.0" viewBox="0 0 36 34"><path d="M2 27 V4 Q2 2 4 2 H16 Q18 2 18 4 V12 H32 Q34 12 34 14 V27 Q34 29 32 29 H4 Q2 29 2 27 Z" stroke="#2f7ff0" stroke-width="2.6" fill="#ffffff" stroke-linejoin="round" stroke-linecap="round" /><path d="M7 5 V9 L11 5" stroke="#2f7ff0" stroke-width="1.8" fill="none" stroke-linejoin="round" stroke-linecap="round" /></svg>
<div class="t" style="left:2252.500px;top:499.963px;font-size:11.55px;color:#1e1e1e;font-weight:normal;-webkit-text-stroke:0.22px #1e1e1e;">2. Story</div>
<svg style="left:2230.5px;top:520.58px;" width="18.0" height="17.0" viewBox="0 0 36 34"><path d="M2 27 V4 Q2 2 4 2 H16 Q18 2 18 4 V12 H32 Q34 12 34 14 V27 Q34 29 32 29 H4 Q2 29 2 27 Z" stroke="#2f7ff0" stroke-width="2.6" fill="#ffffff" stroke-linejoin="round" stroke-linecap="round" /><path d="M7 5 V9 L11 5" stroke="#2f7ff0" stroke-width="1.8" fill="none" stroke-linejoin="round" stroke-linecap="round" /></svg>
<div class="t" style="left:2252.500px;top:523.653px;font-size:11.55px;color:#1e1e1e;font-weight:normal;-webkit-text-stroke:0.22px #1e1e1e;">1. Story</div>
<svg style="left:2230.5px;top:544.27px;" width="18.0" height="17.0" viewBox="0 0 36 34"><path d="M2 27 V4 Q2 2 4 2 H16 Q18 2 18 4 V12 H32 Q34 12 34 14 V27 Q34 29 32 29 H4 Q2 29 2 27 Z" stroke="#2f7ff0" stroke-width="2.6" fill="#ffffff" stroke-linejoin="round" stroke-linecap="round" /><path d="M7 5 V9 L11 5" stroke="#2f7ff0" stroke-width="1.8" fill="none" stroke-linejoin="round" stroke-linecap="round" /></svg>
<div class="t" style="left:2252.500px;top:547.343px;font-size:11.55px;color:#1e1e1e;font-weight:normal;-webkit-text-stroke:0.22px #1e1e1e;">0. Ground Floor</div>
<svg style="left:2216.75px;top:567.96px;" width="18.0" height="17.0" viewBox="0 0 36 34"><path d="M3 27 V11 L17 4 L32 11 V27 Z" stroke="#2f7ff0" stroke-width="2.4" fill="#dfeafa" stroke-linejoin="round" stroke-linecap="round" /><path d="M3 11 H32" stroke="#2f7ff0" stroke-width="2" fill="none" stroke-linejoin="round" stroke-linecap="round" /><rect x="0" y="20" width="12" height="14" fill="#fff"/><path d="M12 27 H32" stroke="#2f7ff0" stroke-width="2.4" fill="none" stroke-linejoin="round" stroke-linecap="round" /><path d="M4 33 C4 28 6 25 11 25" stroke="#1e1e1e" stroke-width="3.4" fill="none" stroke-linejoin="round" stroke-linecap="round" /><path d="M9 21 L15 25 L9 29 Z" stroke="#1e1e1e" stroke-width="1.2" fill="#1e1e1e" stroke-linejoin="round" stroke-linecap="round" /></svg>
<div class="t" style="left:2238.750px;top:571.033px;font-size:11.55px;color:#1e1e1e;font-weight:normal;-webkit-text-stroke:0.22px #1e1e1e;">Sections</div>
<svg style="left:2202.25px;top:596.15px;" width="9.0" height="6.0" viewBox="0 0 18 12"><path d="M2 2 L9 9 L16 2" stroke="#555" stroke-width="2.4" fill="none" stroke-linejoin="round" stroke-linecap="round" /></svg>
<svg style="left:2216.75px;top:591.65px;" width="18.0" height="17.0" viewBox="0 0 36 34"><path d="M3 27 V11 L17 4 L32 11 V27 Z" stroke="#2f7ff0" stroke-width="2.4" fill="#dfeafa" stroke-linejoin="round" stroke-linecap="round" /><path d="M3 11 H32" stroke="#2f7ff0" stroke-width="2" fill="none" stroke-linejoin="round" stroke-linecap="round" /><rect x="0" y="20" width="12" height="14" fill="#fff"/><path d="M12 27 H32" stroke="#2f7ff0" stroke-width="2.4" fill="none" stroke-linejoin="round" stroke-linecap="round" /><path d="M4 33 C4 28 6 25 11 25" stroke="#1e1e1e" stroke-width="3.4" fill="none" stroke-linejoin="round" stroke-linecap="round" /><path d="M9 21 L15 25 L9 29 Z" stroke="#1e1e1e" stroke-width="1.2" fill="#1e1e1e" stroke-linejoin="round" stroke-linecap="round" /></svg>
<div class="t" style="left:2238.750px;top:594.723px;font-size:11.55px;color:#1e1e1e;font-weight:normal;-webkit-text-stroke:0.22px #1e1e1e;">Elevations</div>
<svg style="left:2230.5px;top:615.34px;" width="18.0" height="17.0" viewBox="0 0 36 34"><path d="M3 28 V11 M3 28 H32" stroke="#555" stroke-width="2.4" fill="none" stroke-linejoin="round" stroke-linecap="round" /><path d="M3 11 L17 4 L32 11 V28" stroke="#2f7ff0" stroke-width="2.4" fill="none" stroke-linejoin="round" stroke-linecap="round" /></svg>
<div class="t" style="left:2252.500px;top:618.413px;font-size:11.55px;color:#1e1e1e;font-weight:normal;-webkit-text-stroke:0.22px #1e1e1e;">East Elevation</div>
<svg style="left:2230.5px;top:639.03px;" width="18.0" height="17.0" viewBox="0 0 36 34"><path d="M3 28 V11 M3 28 H32" stroke="#555" stroke-width="2.4" fill="none" stroke-linejoin="round" stroke-linecap="round" /><path d="M3 11 L17 4 L32 11 V28" stroke="#2f7ff0" stroke-width="2.4" fill="none" stroke-linejoin="round" stroke-linecap="round" /></svg>
<div class="t" style="left:2252.500px;top:642.103px;font-size:11.55px;color:#1e1e1e;font-weight:normal;-webkit-text-stroke:0.22px #1e1e1e;">North Elevation</div>
<svg style="left:2230.5px;top:662.72px;" width="18.0" height="17.0" viewBox="0 0 36 34"><path d="M3 28 V11 M3 28 H32" stroke="#555" stroke-width="2.4" fill="none" stroke-linejoin="round" stroke-linecap="round" /><path d="M3 11 L17 4 L32 11 V28" stroke="#2f7ff0" stroke-width="2.4" fill="none" stroke-linejoin="round" stroke-linecap="round" /></svg>
<div class="t" style="left:2252.500px;top:665.793px;font-size:11.55px;color:#1e1e1e;font-weight:normal;-webkit-text-stroke:0.22px #1e1e1e;">South Elevation</div>
<svg style="left:2230.5px;top:686.41px;" width="18.0" height="17.0" viewBox="0 0 36 34"><path d="M3 28 V11 M3 28 H32" stroke="#555" stroke-width="2.4" fill="none" stroke-linejoin="round" stroke-linecap="round" /><path d="M3 11 L17 4 L32 11 V28" stroke="#2f7ff0" stroke-width="2.4" fill="none" stroke-linejoin="round" stroke-linecap="round" /></svg>
<div class="t" style="left:2252.500px;top:689.483px;font-size:11.55px;color:#1e1e1e;font-weight:normal;-webkit-text-stroke:0.22px #1e1e1e;">West Elevation</div>
<svg style="left:2216.75px;top:710.1px;" width="18.0" height="17.0" viewBox="0 0 36 34"><path d="M3 3 H34 V30 H3 Z" stroke="#2f7ff0" stroke-width="2.4" fill="#dfeafa" stroke-linejoin="round" stroke-linecap="round" /><path d="M11 26 V9 H18 V26" stroke="#444" stroke-width="2" fill="none" stroke-linejoin="round" stroke-linecap="round" /><path d="M22 8 H30 V16 H22 Z" stroke="#444" stroke-width="2" fill="none" stroke-linejoin="round" stroke-linecap="round" /><rect x="0" y="20" width="12" height="14" fill="#fff"/><path d="M12 30 H34" stroke="#2f7ff0" stroke-width="2.4" fill="none" stroke-linejoin="round" stroke-linecap="round" /><path d="M4 33 C4 28 6 25 11 25" stroke="#1e1e1e" stroke-width="3.4" fill="none" stroke-linejoin="round" stroke-linecap="round" /><path d="M9 21 L15 25 L9 29 Z" stroke="#1e1e1e" stroke-width="1.2" fill="#1e1e1e" stroke-linejoin="round" stroke-linecap="round" /></svg>
<div class="t" style="left:2238.750px;top:713.173px;font-size:11.55px;color:#1e1e1e;font-weight:normal;-webkit-text-stroke:0.22px #1e1e1e;">Interior Elevations</div>
<svg style="left:2216.75px;top:733.79px;" width="18.0" height="17.0" viewBox="0 0 36 34"><path d="M3 3 H26 L34 10 V30 H3 Z M26 3 V10 H34" stroke="#2f7ff0" stroke-width="2.4" fill="#dfeafa" stroke-linejoin="round" stroke-linecap="round" /><path d="M12 21 L22 11 L25 14 L15 24 Z" stroke="#444" stroke-width="1.8" fill="none" stroke-linejoin="round" stroke-linecap="round" /><path d="M12 26 H30" stroke="#2f7ff0" stroke-width="2" fill="none" stroke-linejoin="round" stroke-linecap="round" /><rect x="0" y="20" width="12" height="14" fill="#fff"/><path d="M4 33 C4 28 6 25 11 25" stroke="#1e1e1e" stroke-width="3.4" fill="none" stroke-linejoin="round" stroke-linecap="round" /><path d="M9 21 L15 25 L9 29 Z" stroke="#1e1e1e" stroke-width="1.2" fill="#1e1e1e" stroke-linejoin="round" stroke-linecap="round" /></svg>
<div class="t" style="left:2238.750px;top:736.863px;font-size:11.55px;color:#1e1e1e;font-weight:normal;-webkit-text-stroke:0.22px #1e1e1e;">Worksheets</div>
<svg style="left:2216.75px;top:757.48px;" width="18.0" height="17.0" viewBox="0 0 36 34"><circle cx="19" cy="16" r="15" stroke="#2f7ff0" stroke-width="2.4" fill="#dfeafa"/><path d="M19 1 V31 M19 10 H34 M19 21 H34 M26 10 V21" stroke="#444" stroke-width="2" fill="none" stroke-linejoin="round" stroke-linecap="round" /><rect x="0" y="20" width="12" height="14" fill="#fff"/><path d="M4 33 C4 28 6 25 11 25" stroke="#1e1e1e" stroke-width="3.4" fill="none" stroke-linejoin="round" stroke-linecap="round" /><path d="M9 21 L15 25 L9 29 Z" stroke="#1e1e1e" stroke-width="1.2" fill="#1e1e1e" stroke-linejoin="round" stroke-linecap="round" /></svg>
<div class="t" style="left:2238.750px;top:760.553px;font-size:11.55px;color:#1e1e1e;font-weight:normal;-webkit-text-stroke:0.22px #1e1e1e;">Details</div>
<svg style="left:2216.75px;top:781.17px;" width="18.0" height="17.0" viewBox="0 0 36 34"><path d="M3 3 H26 L34 10 V30 H3 Z M26 3 V10 H34" stroke="#2f7ff0" stroke-width="2.4" fill="#dfeafa" stroke-linejoin="round" stroke-linecap="round" /><path d="M12 10 L16 7 H26 V22 L22 26 H12 Z M12 10 H22 V26 M22 10 L26 7" stroke="#2f7ff0" stroke-width="2" fill="none" stroke-linejoin="round" stroke-linecap="round" /><rect x="0" y="20" width="12" height="14" fill="#fff"/><path d="M4 33 C4 28 6 25 11 25" stroke="#1e1e1e" stroke-width="3.4" fill="none" stroke-linejoin="round" stroke-linecap="round" /><path d="M9 21 L15 25 L9 29 Z" stroke="#1e1e1e" stroke-width="1.2" fill="#1e1e1e" stroke-linejoin="round" stroke-linecap="round" /></svg>
<div class="t" style="left:2238.750px;top:784.243px;font-size:11.55px;color:#1e1e1e;font-weight:normal;-webkit-text-stroke:0.22px #1e1e1e;">3D Documents</div>
<svg style="left:2202.25px;top:809.36px;" width="9.0" height="6.0" viewBox="0 0 18 12"><path d="M2 2 L9 9 L16 2" stroke="#555" stroke-width="2.4" fill="none" stroke-linejoin="round" stroke-linecap="round" /></svg>
<svg style="left:2216.75px;top:804.86px;" width="18.0" height="17.0" viewBox="0 0 36 34"><path d="M3 29 V3 H13 L17 7 H34 V29 Z" stroke="#2a2a2a" stroke-width="2.4" fill="#e4e4e6" stroke-linejoin="round" stroke-linecap="round" /><path d="M3 9 H34" stroke="#2a2a2a" stroke-width="2" fill="none" stroke-linejoin="round" stroke-linecap="round" /></svg>
<div class="t" style="left:2238.750px;top:807.933px;font-size:11.55px;color:#1e1e1e;font-weight:normal;-webkit-text-stroke:0.22px #1e1e1e;">3D</div>
<svg style="left:2230.5px;top:828.55px;" width="18.0" height="17.0" viewBox="0 0 36 34"><path d="M3 5 L24 2 L31 7 V27 L24 32 L3 29 Z" stroke="#2f7ff0" stroke-width="2.4" fill="#fff" stroke-linejoin="round" stroke-linecap="round" /><path d="M24 2 V32" stroke="#2f7ff0" stroke-width="2.4" fill="none" stroke-linejoin="round" stroke-linecap="round" /><path d="M3 5 V29" stroke="#555" stroke-width="2.4" fill="none" stroke-linejoin="round" stroke-linecap="round" /></svg>
<div class="t" style="left:2252.500px;top:831.623px;font-size:11.55px;color:#1e1e1e;font-weight:normal;-webkit-text-stroke:0.22px #1e1e1e;">Physical Model</div>
<svg style="left:2230.5px;top:852.24px;" width="18.0" height="17.0" viewBox="0 0 36 34"><path d="M3 9 L11 3 H31 V25 L23 31 H3 Z M3 9 H23 V31 M23 9 L31 3" stroke="#2f7ff0" stroke-width="2.4" fill="#fff" stroke-linejoin="round" stroke-linecap="round" /><path d="M3 9 V31 H23" stroke="#555" stroke-width="2.4" fill="none" stroke-linejoin="round" stroke-linecap="round" /></svg>
<div class="t" style="left:2252.500px;top:855.313px;font-size:11.55px;color:#1e1e1e;font-weight:normal;-webkit-text-stroke:0.22px #1e1e1e;">Physical Model - Frontal Axonometry</div>
<svg style="left:2230.5px;top:875.93px;" width="18.0" height="17.0" viewBox="0 0 36 34"><path d="M3 5 L24 2 L31 7 V27 L24 32 L3 29 Z" stroke="#2f7ff0" stroke-width="2.4" fill="#fff" stroke-linejoin="round" stroke-linecap="round" /><path d="M24 2 V32" stroke="#2f7ff0" stroke-width="2.4" fill="none" stroke-linejoin="round" stroke-linecap="round" /><path d="M3 5 V29" stroke="#555" stroke-width="2.4" fill="none" stroke-linejoin="round" stroke-linecap="round" /></svg>
<div class="t" style="left:2252.500px;top:879.003px;font-size:11.55px;color:#1e1e1e;font-weight:normal;-webkit-text-stroke:0.22px #1e1e1e;">Structural Analytical Model with Core</div>
<svg style="left:2204.25px;top:902.62px;" width="6.0" height="9.0" viewBox="0 0 12 18"><path d="M2 2 L9 9 L2 16" stroke="#555" stroke-width="2.4" fill="none" stroke-linejoin="round" stroke-linecap="round" /></svg>
<svg style="left:2216.75px;top:899.62px;" width="18.0" height="17.0" viewBox="0 0 36 34"><path d="M3 29 V3 H13 L17 7 H34 V29 Z" stroke="#2a2a2a" stroke-width="2.4" fill="#e4e4e6" stroke-linejoin="round" stroke-linecap="round" /><path d="M3 9 H34" stroke="#2a2a2a" stroke-width="2" fill="none" stroke-linejoin="round" stroke-linecap="round" /></svg>
<div class="t" style="left:2238.750px;top:902.693px;font-size:11.55px;color:#1e1e1e;font-weight:normal;-webkit-text-stroke:0.22px #1e1e1e;">Indexes</div>
<svg style="left:2190.5px;top:1254.0px;" width="23.0" height="21.0" viewBox="0 0 46 42"><path d="M2 22 H32 V40 H2 Z M6 40 V30 L13 23 L20 28 L27 30 V40" stroke="#222" stroke-width="2.6" fill="none" stroke-linejoin="round" stroke-linecap="round" /><circle cx="34" cy="11" r="8.5" stroke="#2f7ff0" stroke-width="2.4" fill="#e8e8e8"/><path d="M29 11 H39 M34 6 V16" stroke="#2f7ff0" stroke-width="2.4" fill="none" stroke-linejoin="round" stroke-linecap="round" /></svg>
<svg style="left:2220.0px;top:1254.0px;" width="23.0" height="21.0" viewBox="0 0 46 42"><path d="M4 22 H34 V40 H4 Z M8 40 V30 L15 23 L22 28 L29 30 V40" stroke="#222" stroke-width="2.6" fill="none" stroke-linejoin="round" stroke-linecap="round" /><path d="M2 38 q2 -6 7 -6 M7 29 l3 3 l-3 3" stroke="#222" stroke-width="2.8" fill="none" stroke-linejoin="round" stroke-linecap="round" /><circle cx="35" cy="11" r="8.5" stroke="#2f7ff0" stroke-width="2.4" fill="#e8e8e8"/><path d="M30 11 H40 M35 6 V16" stroke="#2f7ff0" stroke-width="2.4" fill="none" stroke-linejoin="round" stroke-linecap="round" /></svg>
<svg style="left:2251.0px;top:1254.0px;" width="23.0" height="21.0" viewBox="0 0 46 42"><path d="M2 40 V20 H11 L14 24 H32 V40 Z" stroke="#222" stroke-width="2.6" fill="none" stroke-linejoin="round" stroke-linecap="round" /><circle cx="33" cy="11" r="8.5" stroke="#2f7ff0" stroke-width="2.4" fill="#e8e8e8"/><path d="M28 11 H38 M33 6 V16" stroke="#2f7ff0" stroke-width="2.4" fill="none" stroke-linejoin="round" stroke-linecap="round" /></svg>
<svg style="left:2282.5px;top:1259.5px;" width="15.0" height="13.0" viewBox="0 0 30 26"><path d="M2 2 H28 V24 H2 Z M7 9 H9 M12 9 H23 M7 16 H9 M12 16 H23" stroke="#8fb8ee" stroke-width="2.4" fill="none" stroke-linejoin="round" stroke-linecap="round" /></svg>
<svg style="left:2312.5px;top:1259.0px;" width="15.0" height="15.0" viewBox="0 0 30 30"><path d="M3 3 L27 27 M27 3 L3 27" stroke="#e8604c" stroke-width="3.6" fill="none" stroke-linejoin="round" stroke-linecap="round" /></svg>
<div class="a" style="left:2186.5px;top:1283.25px;width:356.5px;height:21.25px;background:#d3d3d3;border-radius:6px;"></div>
<svg style="left:2192.0px;top:1289.5px;" width="10.0" height="7.5" viewBox="0 0 20 15"><path d="M1 1 H19 L10 14 Z" stroke="#7a7a7a" stroke-width="1" fill="#7a7a7a" stroke-linejoin="round" stroke-linecap="round" /></svg>
<div class="t" style="left:2208.250px;top:1288.473px;font-size:11.55px;color:#1e1e1e;font-weight:normal;transform:scaleX(1.0448);transform-origin:0 0;-webkit-text-stroke:0.22px #1e1e1e;">Properties</div>
<div class="t" style="left:2329.500px;top:1310.223px;font-size:11.55px;color:#1e1e1e;font-weight:normal;transform:scaleX(1.0044);transform-origin:0 0;-webkit-text-stroke:0.22px #1e1e1e;">No Selection.</div>
<div class="a" style="left:2167.5px;top:775.0px;width:15.5px;height:31.5px;background:#f0f0f0;border-radius:8px 0 0 8px;"></div>
<div class="a" style="left:2174.5px;top:778.0px;width:1.25px;height:26.0px;background:repeating-linear-gradient(#9a9a9a 0 5px, transparent 5px 8px);"></div>
<div class="a" style="left:131.75px;top:39.5px;width:283.75px;height:472.5px;background:#ececec;border-radius:6px;box-shadow:0 0 0 0.5px rgba(0,0,0,0.18),0 5px 16px rgba(0,0,0,0.22);"></div>
<div class="a" style="left:136.75px;top:293.0px;width:272.5px;height:21.25px;background:#d8d8d8;border-radius:5px;"></div>
<div class="t" style="left:169.500px;top:50.134px;font-size:13.25px;color:#1e1e1e;font-weight:normal;-webkit-text-stroke:0.22px #1e1e1e;">New</div>
<div class="t" style="left:169.500px;top:73.984px;font-size:13.25px;color:#1e1e1e;font-weight:normal;-webkit-text-stroke:0.22px #1e1e1e;">Open</div>
<div class="t" style="left:169.500px;top:97.634px;font-size:13.25px;color:#1e1e1e;font-weight:normal;-webkit-text-stroke:0.22px #1e1e1e;">Close Project</div>
<div class="t" style="left:169.500px;top:121.334px;font-size:13.25px;color:#a9a9a9;font-weight:normal;-webkit-text-stroke:0.22px #a9a9a9;">Leave Teamwork Project</div>
<div class="t" style="left:169.500px;top:155.884px;font-size:13.25px;color:#1e1e1e;font-weight:normal;-webkit-text-stroke:0.22px #1e1e1e;">Save</div>
<div class="t" style="left:169.500px;top:179.534px;font-size:13.25px;color:#1e1e1e;font-weight:normal;-webkit-text-stroke:0.22px #1e1e1e;">Save as...</div>
<div class="t" style="left:169.500px;top:203.384px;font-size:13.25px;color:#1e1e1e;font-weight:normal;-webkit-text-stroke:0.22px #1e1e1e;">Export to BIMcloud...</div>
<div class="t" style="left:169.500px;top:227.034px;font-size:13.25px;color:#a9a9a9;font-weight:normal;-webkit-text-stroke:0.22px #a9a9a9;">Send Changes</div>
<div class="t" style="left:169.500px;top:250.684px;font-size:13.25px;color:#a9a9a9;font-weight:normal;-webkit-text-stroke:0.22px #a9a9a9;">Create Travel Pack</div>
<div class="t" style="left:169.500px;top:274.534px;font-size:13.25px;color:#1e1e1e;font-weight:normal;-webkit-text-stroke:0.22px #1e1e1e;">Publish BIMx Hyper-model...</div>
<div class="t" style="left:145.500px;top:296.634px;font-size:13.25px;color:#1e1e1e;font-weight:normal;-webkit-text-stroke:0.22px #1e1e1e;">Interoperability</div>
<div class="t" style="left:145.500px;top:329.634px;font-size:13.25px;color:#1e1e1e;font-weight:normal;-webkit-text-stroke:0.22px #1e1e1e;">External Content</div>
<div class="t" style="left:145.500px;top:351.634px;font-size:13.25px;color:#1e1e1e;font-weight:normal;-webkit-text-stroke:0.22px #1e1e1e;">Libraries and Objects</div>
<div class="t" style="left:145.500px;top:373.634px;font-size:13.25px;color:#1e1e1e;font-weight:normal;-webkit-text-stroke:0.22px #1e1e1e;">Info</div>
<div class="t" style="left:169.500px;top:406.884px;font-size:13.25px;color:#1e1e1e;font-weight:normal;-webkit-text-stroke:0.22px #1e1e1e;">Plot Setup...</div>
<div class="t" style="left:169.500px;top:430.634px;font-size:13.25px;color:#1e1e1e;font-weight:normal;-webkit-text-stroke:0.22px #1e1e1e;">Plot...</div>
<div class="t" style="left:169.500px;top:464.884px;font-size:13.25px;color:#1e1e1e;font-weight:normal;-webkit-text-stroke:0.22px #1e1e1e;">Page Setup...</div>
<div class="t" style="left:169.500px;top:488.384px;font-size:13.25px;color:#1e1e1e;font-weight:normal;-webkit-text-stroke:0.22px #1e1e1e;">Print...</div>
<div class="a" style="left:145.5px;top:144.5px;width:256.0px;height:0.75px;background:#d3d3d3;"></div>
<div class="a" style="left:145.5px;top:319.75px;width:256.0px;height:0.75px;background:#d3d3d3;"></div>
<div class="a" style="left:145.5px;top:396.75px;width:256.0px;height:0.75px;background:#d3d3d3;"></div>
<div class="a" style="left:145.5px;top:454.25px;width:256.0px;height:0.75px;background:#d3d3d3;"></div>
<svg style="left:393.0px;top:52.5px;" width="7.0" height="9.0" viewBox="0 0 14 18"><path d="M3 2 L11 9 L3 16" stroke="#2a2a2a" stroke-width="2.6" fill="none" stroke-linejoin="round" stroke-linecap="round" /></svg>
<svg style="left:393.0px;top:76.35px;" width="7.0" height="9.0" viewBox="0 0 14 18"><path d="M3 2 L11 9 L3 16" stroke="#2a2a2a" stroke-width="2.6" fill="none" stroke-linejoin="round" stroke-linecap="round" /></svg>
<svg style="left:393.0px;top:299.0px;" width="7.0" height="9.0" viewBox="0 0 14 18"><path d="M3 2 L11 9 L3 16" stroke="#2a2a2a" stroke-width="2.6" fill="none" stroke-linejoin="round" stroke-linecap="round" /></svg>
<svg style="left:393.0px;top:332.0px;" width="7.0" height="9.0" viewBox="0 0 14 18"><path d="M3 2 L11 9 L3 16" stroke="#2a2a2a" stroke-width="2.6" fill="none" stroke-linejoin="round" stroke-linecap="round" /></svg>
<svg style="left:393.0px;top:354.0px;" width="7.0" height="9.0" viewBox="0 0 14 18"><path d="M3 2 L11 9 L3 16" stroke="#2a2a2a" stroke-width="2.6" fill="none" stroke-linejoin="round" stroke-linecap="round" /></svg>
<svg style="left:393.0px;top:376.0px;" width="7.0" height="9.0" viewBox="0 0 14 18"><path d="M3 2 L11 9 L3 16" stroke="#2a2a2a" stroke-width="2.6" fill="none" stroke-linejoin="round" stroke-linecap="round" /></svg>
<div class="a" style="left:410.25px;top:287.0px;width:287.75px;height:216.5px;background:#ececec;border-radius:6px;box-shadow:0 0 0 0.5px rgba(0,0,0,0.18),0 5px 16px rgba(0,0,0,0.22);"></div>
<div class="a" style="left:415.25px;top:429.25px;width:277.75px;height:23.25px;background:#4a90ef;border-radius:5px;"></div>
<div class="t" style="left:448.250px;top:298.384px;font-size:13.25px;color:#1e1e1e;font-weight:normal;-webkit-text-stroke:0.22px #1e1e1e;">Merge...</div>
<div class="t" style="left:448.250px;top:332.834px;font-size:13.25px;color:#1e1e1e;font-weight:normal;-webkit-text-stroke:0.22px #1e1e1e;">IFC</div>
<div class="t" style="left:448.250px;top:356.384px;font-size:13.25px;color:#1e1e1e;font-weight:normal;-webkit-text-stroke:0.22px #1e1e1e;">SAF</div>
<div class="t" style="left:424.500px;top:378.984px;font-size:13.25px;color:#1e1e1e;font-weight:normal;-webkit-text-stroke:0.22px #1e1e1e;">DXF-DWG</div>
<div class="t" style="left:424.500px;top:400.784px;font-size:13.25px;color:#1e1e1e;font-weight:normal;-webkit-text-stroke:0.22px #1e1e1e;">Classifications and Properties</div>
<div class="t" style="left:448.250px;top:434.134px;font-size:13.25px;color:#ffffff;font-weight:normal;-webkit-text-stroke:0.22px #ffffff;">Import Point Clouds...</div>
<div class="t" style="left:448.250px;top:458.284px;font-size:13.25px;color:#1e1e1e;font-weight:normal;-webkit-text-stroke:0.22px #1e1e1e;">Place Mesh from Surveyors Data...</div>
<div class="t" style="left:424.500px;top:480.884px;font-size:13.25px;color:#a9a9a9;font-weight:normal;-webkit-text-stroke:0.22px #a9a9a9;">Send Model to Google Earth</div>
<div class="a" style="left:424.5px;top:321.6px;width:259.5px;height:0.75px;background:#d3d3d3;"></div>
<div class="a" style="left:424.5px;top:423.5px;width:259.5px;height:0.75px;background:#d3d3d3;"></div>
<svg style="left:676.5px;top:300.75px;" width="7.0" height="9.0" viewBox="0 0 14 18"><path d="M3 2 L11 9 L3 16" stroke="#2a2a2a" stroke-width="2.6" fill="none" stroke-linejoin="round" stroke-linecap="round" /></svg>
<svg style="left:676.5px;top:335.2px;" width="7.0" height="9.0" viewBox="0 0 14 18"><path d="M3 2 L11 9 L3 16" stroke="#2a2a2a" stroke-width="2.6" fill="none" stroke-linejoin="round" stroke-linecap="round" /></svg>
<svg style="left:676.5px;top:358.75px;" width="7.0" height="9.0" viewBox="0 0 14 18"><path d="M3 2 L11 9 L3 16" stroke="#2a2a2a" stroke-width="2.6" fill="none" stroke-linejoin="round" stroke-linecap="round" /></svg>
<svg style="left:676.5px;top:381.35px;" width="7.0" height="9.0" viewBox="0 0 14 18"><path d="M3 2 L11 9 L3 16" stroke="#2a2a2a" stroke-width="2.6" fill="none" stroke-linejoin="round" stroke-linecap="round" /></svg>
<svg style="left:676.5px;top:403.15px;" width="7.0" height="9.0" viewBox="0 0 14 18"><path d="M3 2 L11 9 L3 16" stroke="#2a2a2a" stroke-width="2.6" fill="none" stroke-linejoin="round" stroke-linecap="round" /></svg>
<div class="t" style="left:389.500px;top:98.269px;font-size:12.5px;color:#a3a3a3;font-weight:normal;-webkit-text-stroke:0.22px #a3a3a3;">W</div>
<svg style="left:376.75px;top:99.25px;" width="11.0" height="11.0" viewBox="0 0 22 22"><path d="M4.2 7 H17.8 M4.2 15 H17.8 M7 4.2 V17.8 M15 4.2 V17.8" stroke="#a3a3a3" stroke-width="2.2" fill="none" stroke-linejoin="round" stroke-linecap="round" /><circle cx="4.2" cy="4.2" r="2.8" stroke="#a3a3a3" stroke-width="2.2" fill="none"/><circle cx="17.8" cy="4.2" r="2.8" stroke="#a3a3a3" stroke-width="2.2" fill="none"/><circle cx="4.2" cy="17.8" r="2.8" stroke="#a3a3a3" stroke-width="2.2" fill="none"/><circle cx="17.8" cy="17.8" r="2.8" stroke="#a3a3a3" stroke-width="2.2" fill="none"/></svg>
<svg style="left:363.0px;top:99.75px;" width="13.0" height="10.0" viewBox="0 0 26 20"><path d="M2 3 H9 L17 17 H24 M15 3 H24" stroke="#a3a3a3" stroke-width="2.2" fill="none" stroke-linejoin="round" stroke-linecap="round" /></svg>
<div class="t" style="left:391.500px;top:156.519px;font-size:12.5px;color:#a3a3a3;font-weight:normal;-webkit-text-stroke:0.22px #a3a3a3;">S</div>
<svg style="left:376.75px;top:157.5px;" width="11.0" height="11.0" viewBox="0 0 22 22"><path d="M4.2 7 H17.8 M4.2 15 H17.8 M7 4.2 V17.8 M15 4.2 V17.8" stroke="#a3a3a3" stroke-width="2.2" fill="none" stroke-linejoin="round" stroke-linecap="round" /><circle cx="4.2" cy="4.2" r="2.8" stroke="#a3a3a3" stroke-width="2.2" fill="none"/><circle cx="17.8" cy="4.2" r="2.8" stroke="#a3a3a3" stroke-width="2.2" fill="none"/><circle cx="4.2" cy="17.8" r="2.8" stroke="#a3a3a3" stroke-width="2.2" fill="none"/><circle cx="17.8" cy="17.8" r="2.8" stroke="#a3a3a3" stroke-width="2.2" fill="none"/></svg>
<div class="t" style="left:391.500px;top:180.169px;font-size:12.5px;color:#a3a3a3;font-weight:normal;-webkit-text-stroke:0.22px #a3a3a3;">S</div>
<svg style="left:376.75px;top:181.15px;" width="11.0" height="11.0" viewBox="0 0 22 22"><path d="M4.2 7 H17.8 M4.2 15 H17.8 M7 4.2 V17.8 M15 4.2 V17.8" stroke="#a3a3a3" stroke-width="2.2" fill="none" stroke-linejoin="round" stroke-linecap="round" /><circle cx="4.2" cy="4.2" r="2.8" stroke="#a3a3a3" stroke-width="2.2" fill="none"/><circle cx="17.8" cy="4.2" r="2.8" stroke="#a3a3a3" stroke-width="2.2" fill="none"/><circle cx="4.2" cy="17.8" r="2.8" stroke="#a3a3a3" stroke-width="2.2" fill="none"/><circle cx="17.8" cy="17.8" r="2.8" stroke="#a3a3a3" stroke-width="2.2" fill="none"/></svg>
<svg style="left:363.5px;top:180.65px;" width="11.0" height="11.0" viewBox="0 0 22 22"><path d="M11 2 L2 11 H7 V20 H15 V11 H20 Z" stroke="#a3a3a3" stroke-width="2.2" fill="none" stroke-linejoin="round" stroke-linecap="round" /></svg>
<div class="t" style="left:391.500px;top:227.669px;font-size:12.5px;color:#a3a3a3;font-weight:normal;-webkit-text-stroke:0.22px #a3a3a3;">S</div>
<svg style="left:376.75px;top:228.65px;" width="11.0" height="11.0" viewBox="0 0 22 22"><path d="M4.2 7 H17.8 M4.2 15 H17.8 M7 4.2 V17.8 M15 4.2 V17.8" stroke="#a3a3a3" stroke-width="2.2" fill="none" stroke-linejoin="round" stroke-linecap="round" /><circle cx="4.2" cy="4.2" r="2.8" stroke="#a3a3a3" stroke-width="2.2" fill="none"/><circle cx="17.8" cy="4.2" r="2.8" stroke="#a3a3a3" stroke-width="2.2" fill="none"/><circle cx="4.2" cy="17.8" r="2.8" stroke="#a3a3a3" stroke-width="2.2" fill="none"/><circle cx="17.8" cy="17.8" r="2.8" stroke="#a3a3a3" stroke-width="2.2" fill="none"/></svg>
<svg style="left:363.0px;top:229.15px;" width="13.0" height="10.0" viewBox="0 0 26 20"><path d="M2 3 H9 L17 17 H24 M15 3 H24" stroke="#a3a3a3" stroke-width="2.2" fill="none" stroke-linejoin="round" stroke-linecap="round" /></svg>
<div class="t" style="left:392.000px;top:465.519px;font-size:12.5px;color:#a3a3a3;font-weight:normal;-webkit-text-stroke:0.22px #a3a3a3;">P</div>
<svg style="left:376.75px;top:466.5px;" width="11.0" height="11.0" viewBox="0 0 22 22"><path d="M4.2 7 H17.8 M4.2 15 H17.8 M7 4.2 V17.8 M15 4.2 V17.8" stroke="#a3a3a3" stroke-width="2.2" fill="none" stroke-linejoin="round" stroke-linecap="round" /><circle cx="4.2" cy="4.2" r="2.8" stroke="#a3a3a3" stroke-width="2.2" fill="none"/><circle cx="17.8" cy="4.2" r="2.8" stroke="#a3a3a3" stroke-width="2.2" fill="none"/><circle cx="4.2" cy="17.8" r="2.8" stroke="#a3a3a3" stroke-width="2.2" fill="none"/><circle cx="17.8" cy="17.8" r="2.8" stroke="#a3a3a3" stroke-width="2.2" fill="none"/></svg>
<svg style="left:363.0px;top:467.0px;" width="13.0" height="10.0" viewBox="0 0 26 20"><path d="M2 3 H9 L17 17 H24 M15 3 H24" stroke="#a3a3a3" stroke-width="2.2" fill="none" stroke-linejoin="round" stroke-linecap="round" /></svg>
<div class="t" style="left:392.000px;top:489.019px;font-size:12.5px;color:#a3a3a3;font-weight:normal;-webkit-text-stroke:0.22px #a3a3a3;">P</div>
<svg style="left:376.75px;top:490.0px;" width="11.0" height="11.0" viewBox="0 0 22 22"><path d="M4.2 7 H17.8 M4.2 15 H17.8 M7 4.2 V17.8 M15 4.2 V17.8" stroke="#a3a3a3" stroke-width="2.2" fill="none" stroke-linejoin="round" stroke-linecap="round" /><circle cx="4.2" cy="4.2" r="2.8" stroke="#a3a3a3" stroke-width="2.2" fill="none"/><circle cx="17.8" cy="4.2" r="2.8" stroke="#a3a3a3" stroke-width="2.2" fill="none"/><circle cx="4.2" cy="17.8" r="2.8" stroke="#a3a3a3" stroke-width="2.2" fill="none"/><circle cx="17.8" cy="17.8" r="2.8" stroke="#a3a3a3" stroke-width="2.2" fill="none"/></svg>
<svg style="left:146.0px;top:47.5px;" width="16.0" height="19.0" viewBox="0 0 32 38"><path d="M3 3 H19 L28 12 V35 H3 Z M19 3 V12 H28" stroke="#262626" stroke-width="2.6" fill="none" stroke-linejoin="round" stroke-linecap="round" /></svg>
<svg style="left:144.0px;top:70.5px;" width="21.0" height="18.0" viewBox="0 0 42 36"><path d="M3 33 V8 H13 L16 12 H26 M3 33 L10 18 H38 L32 33 Z" stroke="#262626" stroke-width="2.6" fill="none" stroke-linejoin="round" stroke-linecap="round" /><path d="M24 14 C26 8 30 6 36 6 M32 2 L37 6 L32 10" stroke="#262626" stroke-width="2.2" fill="none" stroke-linejoin="round" stroke-linecap="round" /></svg>
<svg style="left:146.0px;top:94.5px;" width="19.0" height="19.0" viewBox="0 0 38 38"><path d="M3 34 V3 H19 L26 10 V20 M3 34 H18 M19 3 V10 H26" stroke="#262626" stroke-width="2.6" fill="none" stroke-linejoin="round" stroke-linecap="round" /><path d="M24 25 L34 35 M34 25 L24 35" stroke="#262626" stroke-width="2.6" fill="none" stroke-linejoin="round" stroke-linecap="round" /></svg>
<svg style="left:146.0px;top:118.5px;" width="18.0" height="19.0" viewBox="0 0 36 38"><circle cx="14" cy="9" r="6" stroke="#262626" stroke-width="2.4" fill="none"/><path d="M4 32 C4 22 8 18 14 18 C18 18 22 20 24 22 M8 34 H14 M6 24 V34" stroke="#262626" stroke-width="2.4" fill="none" stroke-linejoin="round" stroke-linecap="round" /><path d="M20 26 L30 36 M30 26 L20 36" stroke="#2f7ff0" stroke-width="2.6" fill="none" stroke-linejoin="round" stroke-linecap="round" /></svg>
<svg style="left:144.5px;top:153.0px;" width="19.0" height="19.0" viewBox="0 0 38 38"><path d="M3 3 H27 L34 10 V34 H3 Z M10 3 V12 H26 V3 M21 5 V10 M9 34 V22 H28 V34" stroke="#262626" stroke-width="2.6" fill="none" stroke-linejoin="round" stroke-linecap="round" /></svg>
<svg style="left:144.5px;top:177.0px;" width="19.0" height="19.0" viewBox="0 0 38 38"><path d="M3 3 H27 L34 10 V34 H3 Z M10 3 V12 H26 V3 M21 5 V10 M9 34 V22 H28 V34" stroke="#262626" stroke-width="2.6" fill="none" stroke-linejoin="round" stroke-linecap="round" /><path d="M24 35 H26 M29 35 H31 M34 35 H36" stroke="#262626" stroke-width="3.2" fill="none" stroke-linejoin="round" stroke-linecap="round" /></svg>
<svg style="left:144.5px;top:200.5px;" width="19.0" height="19.0" viewBox="0 0 38 38"><path d="M3 34 V3 H27 L34 10 V18 M10 3 V12 H26 V3 M21 5 V10 M9 34 V22 H16" stroke="#262626" stroke-width="2.6" fill="none" stroke-linejoin="round" stroke-linecap="round" /><path d="M18 35 C14 35 14 28 19 28 C20 23 28 23 29 28 C34 28 34 35 30 35" stroke="#262626" stroke-width="2.4" fill="none" stroke-linejoin="round" stroke-linecap="round" /></svg>
<svg style="left:147.0px;top:226.0px;" width="18.0" height="14.0" viewBox="0 0 36 28"><path d="M3 10 H28 M3 18 H28 M22 4 L30 14 L22 24" stroke="#262626" stroke-width="2.4" fill="none" stroke-linejoin="round" stroke-linecap="round" /></svg>
<svg style="left:144.0px;top:247.0px;" width="20.0" height="20.0" viewBox="0 0 40 40"><path d="M7 3 V16 M3 12 L7 16 L11 12" stroke="#262626" stroke-width="2.4" fill="none" stroke-linejoin="round" stroke-linecap="round" /><rect x="12" y="20" width="24" height="16" rx="2" stroke="#262626" stroke-width="2.6" fill="none"/><path d="M18 20 V15 H30 V20 M20 20 V36 M28 20 V36" stroke="#262626" stroke-width="2.2" fill="none" stroke-linejoin="round" stroke-linecap="round" /></svg>
<svg style="left:146.0px;top:270.5px;" width="18.0" height="20.0" viewBox="0 0 36 40"><path d="M5 3 H21 L30 12 V37 H5 Z M21 3 V12 H30" stroke="#262626" stroke-width="2.6" fill="none" stroke-linejoin="round" stroke-linecap="round" /><rect x="2" y="16" width="20" height="16" rx="2" stroke="#262626" stroke-width="1" fill="#262626"/><path d="M7 24 C7 20 11 20 12 24 C13 28 17 28 17 24" stroke="#fff" stroke-width="1.8" fill="none" stroke-linejoin="round" stroke-linecap="round" /></svg>
<svg style="left:144.5px;top:403.5px;" width="19.0" height="20.0" viewBox="0 0 38 40"><rect x="4" y="3" width="26" height="28" rx="2" stroke="#262626" stroke-width="2.6" fill="none"/><path d="M2 10 H32 M9 3 V31 M2 34 H32 M8 31 V36 M26 31 V36" stroke="#262626" stroke-width="2.4" fill="none" stroke-linejoin="round" stroke-linecap="round" /><rect x="16" y="18" width="20" height="17" rx="2" stroke="#2f7ff0" stroke-width="2.4" fill="#ececec"/><path d="M20 24 H22 M25 24 H32 M20 29 H22 M25 29 H32" stroke="#2f7ff0" stroke-width="2" fill="none" stroke-linejoin="round" stroke-linecap="round" /></svg>
<svg style="left:144.5px;top:427.0px;" width="19.0" height="20.0" viewBox="0 0 38 40"><rect x="4" y="3" width="26" height="28" rx="2" stroke="#262626" stroke-width="2.6" fill="none"/><path d="M2 10 H32 M9 3 V31 M2 34 H32 M8 31 V36 M26 31 V36" stroke="#262626" stroke-width="2.4" fill="none" stroke-linejoin="round" stroke-linecap="round" /><path d="M14 16 H26 M14 22 H26" stroke="#262626" stroke-width="2.2" fill="none" stroke-linejoin="round" stroke-linecap="round" /></svg>
<svg style="left:144.5px;top:461.0px;" width="19.0" height="19.0" viewBox="0 0 38 38"><path d="M10 12 V3 H26 V12 M4 12 H32 V28 H4 Z M10 22 H26 V34 H10 Z" stroke="#262626" stroke-width="2.6" fill="none" stroke-linejoin="round" stroke-linecap="round" /><rect x="17" y="18" width="20" height="17" rx="2" stroke="#2f7ff0" stroke-width="2.4" fill="#ececec"/><path d="M21 24 H23 M26 24 H33 M21 29 H23 M26 29 H33" stroke="#2f7ff0" stroke-width="2" fill="none" stroke-linejoin="round" stroke-linecap="round" /></svg>
<svg style="left:144.5px;top:485.5px;" width="19.0" height="19.0" viewBox="0 0 38 38"><path d="M10 12 V3 H26 V12 M4 12 H32 V28 H4 Z M10 22 H26 V34 H10 Z" stroke="#262626" stroke-width="2.6" fill="none" stroke-linejoin="round" stroke-linecap="round" /></svg>
<svg style="left:423.0px;top:299.0px;" width="20.0" height="12.0" viewBox="0 0 40 24"><path d="M3 3 H11 L15 7 V20 H3 Z M22 3 H30 L34 7 V20 H22 Z M16 12 H21 M18.5 9.5 V14.5" stroke="#262626" stroke-width="2.2" fill="none" stroke-linejoin="round" stroke-linecap="round" /></svg>
<svg style="left:423.0px;top:330.0px;" width="19.0" height="18.5" viewBox="0 0 38 37"><g transform="rotate(45 19 18)"><rect x="6" y="3" width="13" height="20" rx="4" stroke="#2b6fd6" stroke-width="4" fill="none"/><rect x="19" y="13" width="13" height="20" rx="4" stroke="#d6336c" stroke-width="4" fill="none"/><rect x="3" y="19" width="20" height="13" rx="4" stroke="#7b3fc4" stroke-width="4" fill="none"/><rect x="13" y="6" width="20" height="13" rx="4" stroke="#1fb5a3" stroke-width="4" fill="none"/></g></svg>
<svg style="left:423.0px;top:353.5px;" width="19.0" height="18.0" viewBox="0 0 38 36"><path d="M19 4 L34 10 V26 L19 32 L4 26 V10 Z M4 10 L19 16 L34 10 M19 16 V32" stroke="#262626" stroke-width="2.2" fill="none" stroke-linejoin="round" stroke-linecap="round" /><circle cx="19" cy="4" r="3" stroke="#e2562c" stroke-width="1" fill="#e2562c"/><circle cx="19" cy="16" r="3" stroke="#e2562c" stroke-width="1" fill="#e2562c"/><circle cx="34" cy="10" r="2.5" stroke="#5b9bd6" stroke-width="1" fill="#5b9bd6"/><circle cx="19" cy="32" r="2.5" stroke="#5b9bd6" stroke-width="1" fill="#5b9bd6"/></svg>
<svg style="left:423.0px;top:433.0px;" width="20.0" height="17.0" viewBox="0 0 40 34"><path d="M3 20 V12 L16 3 L36 8 V20 M16 3 L22 14 H36 M3 12 L22 14" stroke="#fff" stroke-width="2.4" fill="none" stroke-linejoin="round" stroke-linecap="round" /><path d="M4 26 H6 M12 30 H14 M20 30 H22 M34 26 H36 M28 30 H30 M4 32 H6 M34 32 H36" stroke="#fff" stroke-width="3" fill="none" stroke-linejoin="round" stroke-linecap="round" /></svg>
<svg style="left:423.0px;top:456.0px;" width="20.0" height="19.0" viewBox="0 0 40 38"><rect x="4" y="3" width="12" height="14" rx="1" stroke="#262626" stroke-width="2.2" fill="none"/><path d="M7 8 H13 M7 12 H13" stroke="#262626" stroke-width="1.6" fill="none" stroke-linejoin="round" stroke-linecap="round" /><path d="M14 30 L24 22 L36 28 L28 34 Z M24 28 V36 M22 24 L30 30" stroke="#262626" stroke-width="2.2" fill="none" stroke-linejoin="round" stroke-linecap="round" /><path d="M10 34 C4 34 4 24 12 24 M8 21 L12 24 L9 27" stroke="#2f7ff0" stroke-width="2.4" fill="none" stroke-linejoin="round" stroke-linecap="round" /></svg>
<svg style="left:600.0px;top:438.0px;" width="15.0" height="20.0" viewBox="0 0 30 40"><path d="M4 3 V30 L11 24 L16 35 L21 33 L16 22 H25 Z" stroke="#fff" stroke-width="2.4" fill="#111" stroke-linejoin="round" stroke-linecap="round" /></svg></div></div>
</div>
</body></html>
